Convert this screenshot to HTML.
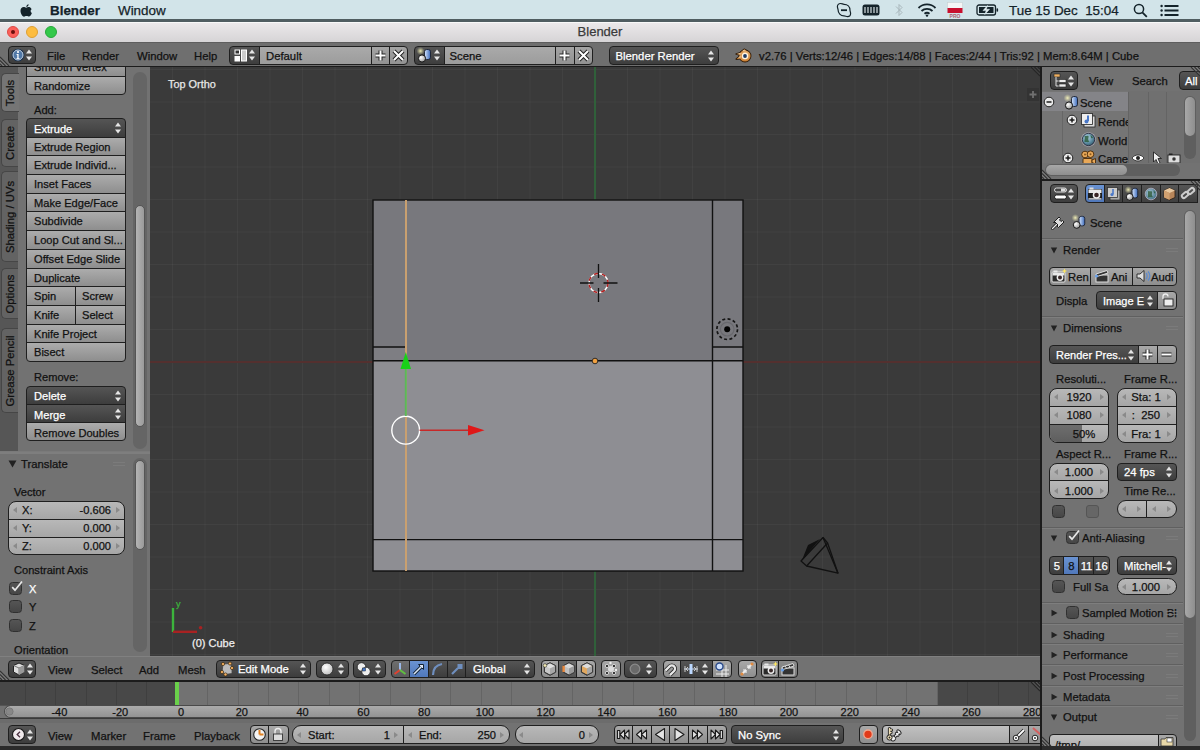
<!DOCTYPE html><html><head><meta charset="utf-8"><style>
*{margin:0;padding:0;box-sizing:border-box}
html,body{width:1200px;height:750px;overflow:hidden;background:#2a2a2a;font-family:"Liberation Sans",sans-serif}
.t{position:absolute;line-height:20px;white-space:nowrap;-webkit-text-stroke:0.25px currentColor}
div{position:absolute}
</style></head><body><div style="position:absolute;left:0px;top:0px;width:1200px;height:20px;background:#d2e4e9"></div>
<div style="position:absolute;left:0px;top:19px;width:1200px;height:3px;background:#505d61"></div>
<div style="position:absolute;left:0px;top:22px;width:1200px;height:1px;background:#f8f8f8"></div>
<div class="t" style="left:50px;top:0.8000000000000007px;font-size:13.4px;color:#14232a;font-weight:bold">Blender</div>
<svg style="position:absolute;left:19px;top:1px" width="14" height="17" viewBox="0 0 14 17"><path d="M9.6 1.2C9.7 2.5 8.7 3.9 7.3 4C7.2 2.7 8.3 1.4 9.6 1.2Z M12.6 6.3C11.3 7.1 11.2 9.2 12.9 10.1C12.5 11.5 11.4 13.5 10.2 13.6C9.2 13.7 9 13 7.6 13C6.2 13 5.9 13.7 5 13.7C3.8 13.7 1.5 11 1.5 7.8C1.5 5.3 3.1 4.1 4.6 4.1C5.7 4.1 6.4 4.8 7.2 4.8C8 4.8 8.6 4.1 9.9 4.1C10.6 4.1 11.8 4.5 12.6 6.3Z" fill="#14232a" transform="translate(0,2)"/></svg>
<svg style="position:absolute;left:836px;top:2px" width="16" height="16" viewBox="0 0 16 16"><path d="M4.5 1.5C6 1.5 6.8 2.3 8 2.3C11.5 2.3 14 4.8 14 8.3C14 9.4 14.6 10 14.6 11.5C14.6 13.3 13.3 14.6 11.5 14.6C10.3 14.6 9.3 13.9 8 13.9C4.5 13.9 2.1 11.2 2.1 8C2.1 6.8 1.4 6 1.4 4.6C1.4 2.9 2.8 1.5 4.5 1.5Z" fill="none" stroke="#14232a" stroke-width="1.2"/><path d="M5 8.2H11" stroke="#14232a" stroke-width="1.8"/></svg>
<svg style="position:absolute;left:862px;top:4px" width="18" height="12"><rect x="0.5" y="0.5" width="17" height="11" rx="2.5" fill="#14232a"/><path d="M3 3V9M6 3V9M9 3V9M12 3V9M15 3V9" stroke="#e8f0f2" stroke-width="1.1"/></svg>
<svg style="position:absolute;left:894px;top:2px" width="10" height="16"><path d="M2 4.5L8 10.5L5 13.5V2.5L8 5.5L2 11.5" fill="none" stroke="#a8b6bb" stroke-width="1"/></svg>
<svg style="position:absolute;left:917px;top:3px" width="20" height="14" viewBox="0 0 20 14"><path d="M1.5 5A12 12 0 0 1 18.5 5" stroke="#14232a" stroke-width="1.8" fill="none"/><path d="M4.5 8A8 8 0 0 1 15.5 8" stroke="#14232a" stroke-width="1.8" fill="none"/><path d="M7.5 10.8A4 4 0 0 1 12.5 10.8" stroke="#14232a" stroke-width="1.8" fill="none"/><circle cx="10" cy="12.6" r="1.2" fill="#14232a"/></svg>
<svg style="position:absolute;left:947px;top:2px" width="16" height="16"><rect x="0.5" y="0.5" width="15" height="6" fill="#f4f6f6" stroke="#c8d0d2" stroke-width="0.6"/><rect x="0.5" y="6" width="15" height="5" fill="#c8102e"/><text x="8" y="15.8" font-size="5" font-family="Liberation Sans" fill="#b06070" text-anchor="middle" font-weight="bold">PRO</text></svg>
<svg style="position:absolute;left:976px;top:4px" width="23" height="12" viewBox="0 0 23 12"><rect x="1" y="1" width="18.5" height="10" rx="2" fill="none" stroke="#14232a" stroke-width="1.3"/><rect x="3" y="3" width="14.5" height="6" fill="#14232a"/><path d="M11.5 1.5L7 6.6H10.2L8.8 10.5L13.5 5.3H10.3Z" fill="#e8f0f2" stroke="#d2e4e9" stroke-width="0.6"/><rect x="20.5" y="4.2" width="1.6" height="3.6" rx="0.8" fill="#14232a"/></svg>
<svg style="position:absolute;left:1133px;top:3px" width="15" height="15"><circle cx="6" cy="6" r="4.6" fill="none" stroke="#14232a" stroke-width="1.5"/><path d="M9.3 9.3L13.8 13.8" stroke="#14232a" stroke-width="1.8"/></svg>
<svg style="position:absolute;left:1160px;top:4px" width="20" height="13"><g fill="#14232a"><circle cx="1.6" cy="2" r="1.2"/><circle cx="1.6" cy="6.5" r="1.2"/><circle cx="1.6" cy="11" r="1.2"/><rect x="4.5" y="1" width="14" height="2"/><rect x="4.5" y="5.5" width="14" height="2"/><rect x="4.5" y="10" width="14" height="2"/></g></svg>
<div class="t" style="left:118px;top:0.8000000000000007px;font-size:13.4px;color:#14232a;">Window</div>
<div class="t" style="left:1009px;top:0.8000000000000007px;font-size:13.4px;color:#14232a;">Tue 15 Dec&nbsp; 15:04</div>
<div style="position:absolute;left:0px;top:23px;width:1200px;height:19px;background:linear-gradient(#ebe8ea,#d6d4d6)"></div>
<div class="t" style="left:500px;width:200px;text-align:center;top:22px;font-size:13px;color:#3a3a3a;">Blender</div>
<div style="position:absolute;left:7px;top:26px;width:12px;height:12px;background:#fc605b;border-radius:50%;border:0.5px solid #de4a45"></div>
<div style="position:absolute;left:26px;top:26px;width:12px;height:12px;background:#fdbc40;border-radius:50%;border:0.5px solid #dea033"></div>
<div style="position:absolute;left:45px;top:26px;width:12px;height:12px;background:#34c84a;border-radius:50%;border:0.5px solid #27a83a"></div>
<div style="position:absolute;left:11px;top:30px;width:4px;height:4px;background:#6a0f0c;border-radius:50%"></div>
<div style="position:absolute;left:0px;top:42px;width:1200px;height:24px;background:#6f6f6f"></div>
<div style="position:absolute;left:0px;top:66px;width:1200px;height:1px;background:#1c1c1c"></div>
<div style="position:absolute;left:0px;top:67px;width:150px;height:385px;background:#727272"></div>
<div style="position:absolute;left:0px;top:67px;width:18px;height:385px;background:#565656"></div>
<div style="position:absolute;left:150px;top:67px;width:890px;height:589px;background:#3a3a3a"></div>
<div style="position:absolute;left:0px;top:452px;width:150px;height:204px;background:#727272"></div>
<div style="position:absolute;left:0px;top:656px;width:1040px;height:24px;background:#727272"></div>
<div style="position:absolute;left:0px;top:680px;width:1040px;height:2px;background:#1c1c1c"></div>
<div style="position:absolute;left:0px;top:682px;width:1040px;height:24px;background:#727272"></div>
<div style="position:absolute;left:0px;top:682px;width:178px;height:24px;background:#484848"></div>
<div style="position:absolute;left:938px;top:682px;width:102px;height:24px;background:#484848"></div>
<div style="position:absolute;left:0px;top:706px;width:1040px;height:12px;background:#727272"></div>
<div style="position:absolute;left:0px;top:718px;width:1040px;height:28px;background:#727272"></div>
<div style="position:absolute;left:0px;top:718px;width:1040px;height:5px;background:#6c6c6c"></div>
<div style="position:absolute;left:1040px;top:67px;width:2px;height:679px;background:#1c1c1c"></div>
<div style="position:absolute;left:1042px;top:67px;width:158px;height:112px;background:#727272"></div>
<div style="position:absolute;left:1042px;top:179px;width:158px;height:2px;background:#1c1c1c"></div>
<div style="position:absolute;left:1042px;top:181px;width:158px;height:565px;background:#727272"></div>
<div style="position:absolute;left:0px;top:42px;width:1200px;height:1px;background:#5e5e5e"></div>
<div style="position:absolute;left:8px;top:46px;width:28px;height:18px;background:linear-gradient(#555,#3d3d3d);border:1px solid #1f1f1f;border-radius:4px"></div>
<svg style="position:absolute;left:11px;top:48px" width="14" height="14" viewBox="0 0 14 14"><circle cx="7" cy="7" r="6.3" fill="#16304f"/><circle cx="7" cy="7" r="5" fill="#4f77a6" stroke="#c8d4e2" stroke-width="1"/><circle cx="7" cy="4" r="1.1" fill="#fff"/><path d="M5.6 6h2v4.2h1v0.9h-3.2v-0.9h0.9v-3.3h-0.7z" fill="#fff"/></svg>
<svg style="position:absolute;left:25px;top:48px" width="8" height="14" viewBox="0 0 8 14"><path d="M4 1.5L7 5.5H1Z M4 12.5L7 8.5H1Z" fill="#e6e6e6"/></svg>
<div class="t" style="left:47px;top:46px;font-size:11.3px;color:#111;">File</div>
<div class="t" style="left:82px;top:46px;font-size:11.3px;color:#111;">Render</div>
<div class="t" style="left:137px;top:46px;font-size:11.3px;color:#111;">Window</div>
<div class="t" style="left:194px;top:46px;font-size:11.3px;color:#111;">Help</div>
<div style="position:absolute;left:229px;top:46px;width:31px;height:19px;background:linear-gradient(#555,#3d3d3d);border:1px solid #1f1f1f;border-radius:4px 0 0 4px"></div>
<svg style="position:absolute;left:234px;top:49px" width="14" height="13" viewBox="0 0 14 13"><rect x="0.5" y="0.5" width="5.5" height="5" fill="#fff"/><rect x="0.5" y="7" width="5.5" height="5.5" fill="#fff"/><rect x="7" y="0.5" width="6" height="12" fill="#fff"/><rect x="1.5" y="1.5" width="3.5" height="3" fill="#333"/><rect x="8" y="1.5" width="4" height="10" fill="#ccc"/></svg>
<svg style="position:absolute;left:248px;top:48px" width="8" height="14" viewBox="0 0 8 14"><path d="M4 1.5L7 5.5H1Z M4 12.5L7 8.5H1Z" fill="#e6e6e6"/></svg>
<div style="position:absolute;left:259px;top:46px;width:113px;height:19px;background:linear-gradient(#aaa,#9c9c9c);border:1px solid #1f1f1f"></div>
<div class="t" style="left:266px;top:46px;font-size:11.3px;color:#111;">Default</div>
<div style="position:absolute;left:371px;top:46px;width:19px;height:19px;background:linear-gradient(#a4a4a4,#929292);border:1px solid #1f1f1f"></div>
<div style="position:absolute;left:389px;top:46px;width:19px;height:19px;background:linear-gradient(#a4a4a4,#929292);border:1px solid #1f1f1f;border-radius:0 4px 4px 0"></div>
<svg style="position:absolute;left:374px;top:49px" width="13" height="13"><path d="M6.5 1.5V11.5M1.5 6.5H11.5" stroke="#222" stroke-width="4"/><path d="M6.5 1.5V11.5M1.5 6.5H11.5" stroke="#fff" stroke-width="2"/></svg>
<svg style="position:absolute;left:392px;top:49px" width="13" height="13"><path d="M2 2L11 11M11 2L2 11" stroke="#222" stroke-width="4"/><path d="M2 2L11 11M11 2L2 11" stroke="#fff" stroke-width="2"/></svg>
<div style="position:absolute;left:414px;top:46px;width:31px;height:19px;background:linear-gradient(#555,#3d3d3d);border:1px solid #1f1f1f;border-radius:4px 0 0 4px"></div>
<svg style="position:absolute;left:416px;top:47px" width="16.0" height="16.0" viewBox="0 0 16 16"><defs><radialGradient id="glw41647"><stop offset="0" stop-color="#fffbc0" stop-opacity="0.9"/><stop offset="1" stop-color="#d8d8a0" stop-opacity="0"/></radialGradient><linearGradient id="cyl41647" x1="0" x2="1"><stop offset="0" stop-color="#d8e8ff"/><stop offset="1" stop-color="#3a68b8"/></linearGradient><radialGradient id="sp41647" cx="0.35" cy="0.35" r="0.7"><stop offset="0" stop-color="#fff"/><stop offset="1" stop-color="#999"/></radialGradient></defs><circle cx="4.5" cy="4" r="4" fill="url(#glw41647)"/><rect x="8.5" y="2.5" width="6" height="10" rx="2.2" fill="url(#cyl41647)" stroke="#1a2030" stroke-width="0.9"/><circle cx="6" cy="11.5" r="3.6" fill="url(#sp41647)" stroke="#151515" stroke-width="1"/></svg>
<svg style="position:absolute;left:433px;top:48px" width="8" height="14" viewBox="0 0 8 14"><path d="M4 1.5L7 5.5H1Z M4 12.5L7 8.5H1Z" fill="#e6e6e6"/></svg>
<div style="position:absolute;left:444px;top:46px;width:112px;height:19px;background:linear-gradient(#aaa,#9c9c9c);border:1px solid #1f1f1f"></div>
<div class="t" style="left:449.5px;top:46px;font-size:11.3px;color:#111;">Scene</div>
<div style="position:absolute;left:555px;top:46px;width:20px;height:19px;background:linear-gradient(#a4a4a4,#929292);border:1px solid #1f1f1f"></div>
<div style="position:absolute;left:574px;top:46px;width:19px;height:19px;background:linear-gradient(#a4a4a4,#929292);border:1px solid #1f1f1f;border-radius:0 4px 4px 0"></div>
<svg style="position:absolute;left:558px;top:49px" width="13" height="13"><path d="M6.5 1.5V11.5M1.5 6.5H11.5" stroke="#222" stroke-width="4"/><path d="M6.5 1.5V11.5M1.5 6.5H11.5" stroke="#fff" stroke-width="2"/></svg>
<svg style="position:absolute;left:577px;top:49px" width="13" height="13"><path d="M2 2L11 11M11 2L2 11" stroke="#222" stroke-width="4"/><path d="M2 2L11 11M11 2L2 11" stroke="#fff" stroke-width="2"/></svg>
<div style="position:absolute;left:609px;top:46px;width:110px;height:19px;background:linear-gradient(#555,#3d3d3d);border:1px solid #1f1f1f;border-radius:4px"></div>
<div class="t" style="left:615.5px;top:45.5px;font-size:11.3px;color:#fff;">Blender Render</div>
<svg style="position:absolute;left:707px;top:48.5px" width="8" height="14" viewBox="0 0 8 14"><path d="M4 1.5L7 5.5H1Z M4 12.5L7 8.5H1Z" fill="#e6e6e6"/></svg>
<svg style="position:absolute;left:735px;top:48px" width="17" height="15" viewBox="0 0 17 15"><defs><radialGradient id="bl" cx="0.5" cy="0.4" r="0.6"><stop offset="0" stop-color="#f8d8a8"/><stop offset="1" stop-color="#c87828"/></radialGradient></defs><g fill="#2a1808" stroke="#2a1808" stroke-width="1.6" stroke-linejoin="round"><circle cx="10" cy="8" r="5.6"/><path d="M5.8 4.2L9.2 1.3L11.6 2.6Z"/><path d="M1.2 6L7.5 4.2L7.6 7.6Z"/><path d="M1.3 11.2L6.2 7L7.2 10.2Z"/></g><g fill="url(#bl)"><circle cx="10" cy="8" r="5.6"/><path d="M5.8 4.2L9.2 1.3L11.6 2.6Z"/><path d="M1.2 6L7.5 4.2L7.6 7.6Z"/><path d="M1.3 11.2L6.2 7L7.2 10.2Z"/></g><circle cx="10" cy="8" r="3.2" fill="#fff4e0"/><circle cx="10" cy="8" r="1.9" fill="#1c3a66"/></svg>
<div class="t" style="left:759px;top:46px;font-size:11.3px;color:#111;">v2.76 | Verts:12/46 | Edges:14/88 | Faces:2/44 | Tris:92 | Mem:8.64M | Cube</div>
<div style="position:absolute;left:1px;top:73px;width:18px;height:39px;background:#757575;border-radius:5px 0 0 5px;border:1px solid #464646;border-right:none"></div>
<div class="t" style="left:-50px;top:82.5px;width:120px;text-align:center;font-size:11.3px;color:#111;transform:rotate(-90deg)">Tools</div>
<div style="position:absolute;left:1px;top:119px;width:17px;height:48px;background:#636363;border-radius:5px 0 0 5px;border:1px solid #464646;border-right:none"></div>
<div class="t" style="left:-50px;top:133.0px;width:120px;text-align:center;font-size:11.3px;color:#111;transform:rotate(-90deg)">Create</div>
<div style="position:absolute;left:1px;top:171px;width:17px;height:91px;background:#636363;border-radius:5px 0 0 5px;border:1px solid #464646;border-right:none"></div>
<div class="t" style="left:-50px;top:206.5px;width:120px;text-align:center;font-size:11.3px;color:#111;transform:rotate(-90deg)">Shading / UVs</div>
<div style="position:absolute;left:1px;top:268px;width:17px;height:51px;background:#636363;border-radius:5px 0 0 5px;border:1px solid #464646;border-right:none"></div>
<div class="t" style="left:-50px;top:283.5px;width:120px;text-align:center;font-size:11.3px;color:#111;transform:rotate(-90deg)">Options</div>
<div style="position:absolute;left:1px;top:328px;width:17px;height:85px;background:#636363;border-radius:5px 0 0 5px;border:1px solid #464646;border-right:none"></div>
<div class="t" style="left:-50px;top:360.5px;width:120px;text-align:center;font-size:11.3px;color:#111;transform:rotate(-90deg)">Grease Pencil</div>
<div style="left:0;top:0;width:150px;height:452px;clip-path:inset(67px 0 0 0)">
<div style="position:absolute;left:26px;top:57px;width:100px;height:20px;background:linear-gradient(#acacac,#8e8e8e);border:1px solid #1f1f1f;border-radius:0;"></div>
<div class="t" style="left:34px;top:57px;font-size:11.1px;color:#111;">Smooth Vertex</div>
<div style="position:absolute;left:26px;top:76px;width:100px;height:19px;background:linear-gradient(#acacac,#8e8e8e);border:1px solid #1f1f1f;border-radius:0 0 4px 4px;"></div>
<div class="t" style="left:34px;top:76px;font-size:11.1px;color:#111;">Randomize</div>
</div>
<div class="t" style="left:34px;top:100px;font-size:11.1px;color:#111;">Add:</div>
<div style="position:absolute;left:26px;top:118px;width:100px;height:20px;background:linear-gradient(#555,#3d3d3d);border:1px solid #1f1f1f;border-radius:4px 4px 0 0"></div>
<svg style="position:absolute;left:114px;top:121.0px" width="8" height="14" viewBox="0 0 8 14"><path d="M4 1.5L7 5.5H1Z M4 12.5L7 8.5H1Z" fill="#e6e6e6"/></svg>
<div class="t" style="left:34px;top:119px;font-size:11.1px;color:#fff;">Extrude</div>
<div style="position:absolute;left:26px;top:137px;width:100px;height:19px;background:linear-gradient(#acacac,#8e8e8e);border:1px solid #1f1f1f;border-radius:0;"></div>
<div class="t" style="left:34px;top:137px;font-size:11.1px;color:#111;">Extrude Region</div>
<div style="position:absolute;left:26px;top:155px;width:100px;height:20px;background:linear-gradient(#acacac,#8e8e8e);border:1px solid #1f1f1f;border-radius:0;"></div>
<div class="t" style="left:34px;top:155px;font-size:11.1px;color:#111;">Extrude Individ...</div>
<div style="position:absolute;left:26px;top:174px;width:100px;height:20px;background:linear-gradient(#acacac,#8e8e8e);border:1px solid #1f1f1f;border-radius:0;"></div>
<div class="t" style="left:34px;top:174px;font-size:11.1px;color:#111;">Inset Faces</div>
<div style="position:absolute;left:26px;top:193px;width:100px;height:19px;background:linear-gradient(#acacac,#8e8e8e);border:1px solid #1f1f1f;border-radius:0;"></div>
<div class="t" style="left:34px;top:193px;font-size:11.1px;color:#111;">Make Edge/Face</div>
<div style="position:absolute;left:26px;top:211px;width:100px;height:20px;background:linear-gradient(#acacac,#8e8e8e);border:1px solid #1f1f1f;border-radius:0;"></div>
<div class="t" style="left:34px;top:211px;font-size:11.1px;color:#111;">Subdivide</div>
<div style="position:absolute;left:26px;top:230px;width:100px;height:20px;background:linear-gradient(#acacac,#8e8e8e);border:1px solid #1f1f1f;border-radius:0;"></div>
<div class="t" style="left:34px;top:230px;font-size:11.1px;color:#111;">Loop Cut and Sl...</div>
<div style="position:absolute;left:26px;top:249px;width:100px;height:20px;background:linear-gradient(#acacac,#8e8e8e);border:1px solid #1f1f1f;border-radius:0;"></div>
<div class="t" style="left:34px;top:249px;font-size:11.1px;color:#111;">Offset Edge Slide</div>
<div style="position:absolute;left:26px;top:268px;width:100px;height:19px;background:linear-gradient(#acacac,#8e8e8e);border:1px solid #1f1f1f;border-radius:0;"></div>
<div class="t" style="left:34px;top:268px;font-size:11.1px;color:#111;">Duplicate</div>
<div style="position:absolute;left:26px;top:286px;width:50px;height:20px;background:linear-gradient(#acacac,#8e8e8e);border:1px solid #1f1f1f;border-radius:0;"></div>
<div style="position:absolute;left:75px;top:286px;width:51px;height:20px;background:linear-gradient(#acacac,#8e8e8e);border:1px solid #1f1f1f;border-radius:0;"></div>
<div class="t" style="left:34px;top:286px;font-size:11.1px;color:#111;">Spin</div>
<div class="t" style="left:82px;top:286px;font-size:11.1px;color:#111;">Screw</div>
<div style="position:absolute;left:26px;top:305px;width:50px;height:20px;background:linear-gradient(#acacac,#8e8e8e);border:1px solid #1f1f1f;border-radius:0;"></div>
<div style="position:absolute;left:75px;top:305px;width:51px;height:20px;background:linear-gradient(#acacac,#8e8e8e);border:1px solid #1f1f1f;border-radius:0;"></div>
<div class="t" style="left:34px;top:305px;font-size:11.1px;color:#111;">Knife</div>
<div class="t" style="left:82px;top:305px;font-size:11.1px;color:#111;">Select</div>
<div style="position:absolute;left:26px;top:324px;width:100px;height:19px;background:linear-gradient(#acacac,#8e8e8e);border:1px solid #1f1f1f;border-radius:0;"></div>
<div class="t" style="left:34px;top:324px;font-size:11.1px;color:#111;">Knife Project</div>
<div style="position:absolute;left:26px;top:342px;width:100px;height:20px;background:linear-gradient(#acacac,#8e8e8e);border:1px solid #1f1f1f;border-radius:0 0 4px 4px;"></div>
<div class="t" style="left:34px;top:342px;font-size:11.1px;color:#111;">Bisect</div>
<div class="t" style="left:34px;top:367px;font-size:11.1px;color:#111;">Remove:</div>
<div style="position:absolute;left:26px;top:386px;width:100px;height:19px;background:linear-gradient(#555,#3d3d3d);border:1px solid #1f1f1f;border-radius:4px 4px 0 0"></div>
<svg style="position:absolute;left:114px;top:388.5px" width="8" height="14" viewBox="0 0 8 14"><path d="M4 1.5L7 5.5H1Z M4 12.5L7 8.5H1Z" fill="#e6e6e6"/></svg>
<div style="position:absolute;left:26px;top:404px;width:100px;height:19px;background:linear-gradient(#555,#3d3d3d);border:1px solid #1f1f1f;border-radius:0"></div>
<svg style="position:absolute;left:114px;top:406.5px" width="8" height="14" viewBox="0 0 8 14"><path d="M4 1.5L7 5.5H1Z M4 12.5L7 8.5H1Z" fill="#e6e6e6"/></svg>
<div style="position:absolute;left:26px;top:422px;width:100px;height:19px;background:linear-gradient(#acacac,#8e8e8e);border:1px solid #1f1f1f;border-radius:0 0 4px 4px;"></div>
<div class="t" style="left:34px;top:386px;font-size:11.1px;color:#fff;">Delete</div>
<div class="t" style="left:34px;top:404.5px;font-size:11.1px;color:#fff;">Merge</div>
<div class="t" style="left:34px;top:423px;font-size:11.1px;color:#111;">Remove Doubles</div>
<div style="position:absolute;left:133px;top:72px;width:14px;height:377px;background:#656565;border-radius:7px"></div>
<div style="position:absolute;left:135px;top:205px;width:10px;height:222px;background:linear-gradient(90deg,#b4b4b4,#9a9a9a);border-radius:5px;border:1px solid #555"></div>
<svg style="position:absolute;left:8px;top:460px" width="9" height="8"><path d="M0.5 0.5H8.5L4.5 7.5Z" fill="#222"/></svg>
<div class="t" style="left:21px;top:454px;font-size:11.3px;color:#111;">Translate</div>
<svg style="position:absolute;left:113px;top:461px" width="12" height="6"><path d="M0 1.5H12M0 4.5H12" stroke="#7e7e7e" stroke-width="0.8"/></svg>
<div class="t" style="left:14px;top:482px;font-size:11.1px;color:#111;">Vector</div>
<div style="position:absolute;left:8px;top:501px;width:117px;height:19px;background:linear-gradient(#b8b8b8,#a6a6a6);border:1px solid #1f1f1f;border-radius:8px 8px 0 0"></div>
<div style="position:absolute;left:8px;top:519px;width:117px;height:19px;background:linear-gradient(#b8b8b8,#a6a6a6);border:1px solid #1f1f1f;border-radius:0"></div>
<div style="position:absolute;left:8px;top:537px;width:117px;height:18px;background:linear-gradient(#b8b8b8,#a6a6a6);border:1px solid #1f1f1f;border-radius:0 0 8px 8px"></div>
<svg style="position:absolute;left:12px;top:506px" width="6" height="8"><path d="M5 1L1 4L5 7Z" fill="#8a8a8a"/></svg>
<svg style="position:absolute;left:115px;top:506px" width="6" height="8"><path d="M1 1L5 4L1 7Z" fill="#8a8a8a"/></svg>
<div class="t" style="left:22px;top:500px;font-size:11.1px;color:#111;">X:</div>
<div class="t" style="right:1089px;top:500px;font-size:11.1px;color:#111;">-0.606</div>
<svg style="position:absolute;left:12px;top:524px" width="6" height="8"><path d="M5 1L1 4L5 7Z" fill="#8a8a8a"/></svg>
<svg style="position:absolute;left:115px;top:524px" width="6" height="8"><path d="M1 1L5 4L1 7Z" fill="#8a8a8a"/></svg>
<div class="t" style="left:22px;top:518px;font-size:11.1px;color:#111;">Y:</div>
<div class="t" style="right:1089px;top:518px;font-size:11.1px;color:#111;">0.000</div>
<svg style="position:absolute;left:12px;top:542px" width="6" height="8"><path d="M5 1L1 4L5 7Z" fill="#8a8a8a"/></svg>
<svg style="position:absolute;left:115px;top:542px" width="6" height="8"><path d="M1 1L5 4L1 7Z" fill="#8a8a8a"/></svg>
<div class="t" style="left:22px;top:536px;font-size:11.1px;color:#111;">Z:</div>
<div class="t" style="right:1089px;top:536px;font-size:11.1px;color:#111;">0.000</div>
<div class="t" style="left:14px;top:560px;font-size:11.1px;color:#111;">Constraint Axis</div>
<div style="position:absolute;left:9px;top:582px;width:13px;height:13px;background:linear-gradient(#555,#464646);border:1px solid #303030;border-radius:3.5px"></div>
<svg style="position:absolute;left:9px;top:579px" width="16" height="16"><path d="M3.2 8.2L6 11.2L13 2.5" stroke="#e8e8e8" stroke-width="1.7" fill="none"/></svg>
<div class="t" style="left:29px;top:579px;font-size:11.1px;color:#fff;">X</div>
<div style="position:absolute;left:9px;top:600px;width:13px;height:13px;background:linear-gradient(#555,#464646);border:1px solid #303030;border-radius:3.5px"></div>
<div class="t" style="left:29px;top:597px;font-size:11.1px;color:#111;">Y</div>
<div style="position:absolute;left:9px;top:619px;width:13px;height:13px;background:linear-gradient(#555,#464646);border:1px solid #303030;border-radius:3.5px"></div>
<div class="t" style="left:29px;top:616px;font-size:11.1px;color:#111;">Z</div>
<div class="t" style="left:14px;top:640px;font-size:11.1px;color:#111;">Orientation</div>
<div style="position:absolute;left:133px;top:458px;width:14px;height:194px;background:#656565;border-radius:7px"></div>
<div style="position:absolute;left:135px;top:460px;width:10px;height:90px;background:linear-gradient(90deg,#b4b4b4,#9a9a9a);border-radius:5px;border:1px solid #555"></div>
<div style="left:150px;top:67px;width:890px;height:589px;overflow:hidden;background-color:#3a3a3a;background-image:linear-gradient(90deg,rgba(255,255,255,0.035) 1px,transparent 1px),linear-gradient(rgba(255,255,255,0.035) 1px,transparent 1px);background-size:32.5px 32.5px;background-position:22px 34.5px"></div>
<div style="position:absolute;left:150px;top:361px;width:890px;height:2px;background:#54302f"></div>
<div style="position:absolute;left:594px;top:67px;width:2px;height:589px;background:#30603a"></div>
<svg style="position:absolute;left:0;top:0" width="1200" height="750"><rect x="373" y="200" width="370" height="161" fill="#78787d"/><rect x="373" y="361" width="370" height="210" fill="#8e8e93"/><rect x="373" y="347" width="33" height="14" fill="#7e7e83"/><rect x="712.5" y="347" width="30.5" height="14" fill="#7e7e83"/><g stroke="#111" stroke-width="1.4" fill="none"><rect x="373" y="200" width="370" height="371"/><path d="M712.5 200V571M373 360.8H743M373 539.6H743M373 347H406M712.5 347H743"/></g><path d="M406 200V571" stroke="#c9a070" stroke-width="2"/><circle cx="595" cy="361" r="2.8" fill="#f0a040" stroke="#222" stroke-width="0.9"/><circle cx="598.5" cy="283" r="9.5" fill="none" stroke="#fff" stroke-width="1.5"/><circle cx="598.5" cy="283" r="9.5" fill="none" stroke="#b02020" stroke-width="1.5" stroke-dasharray="4 4"/><path d="M598.5 264V278M598.5 288V302M580 283H593.5M603.5 283H617.5" stroke="#111" stroke-width="1.3"/><circle cx="727.2" cy="329.2" r="10.3" fill="none" stroke="#151515" stroke-width="1.7" stroke-dasharray="3 2.4"/><circle cx="727.2" cy="329.2" r="6.8" fill="none" stroke="#68686d" stroke-width="1.2"/><circle cx="727.2" cy="329.2" r="3" fill="#000"/><circle cx="405.7" cy="430.2" r="13.9" fill="none" stroke="#fff" stroke-width="1.4"/><path d="M419.6 430.2H469" stroke="#c82828" stroke-width="1.6"/><path d="M468 425L484.5 430.2L468 435.5Z" fill="#e01818"/><path d="M405.8 416V368" stroke="#5ab85a" stroke-width="2"/><path d="M400.5 369L405.8 352L411 369Z" fill="#18d018"/><g stroke="#111" stroke-width="1.3" fill="none" stroke-linejoin="round"><path d="M823 537.5L801 561L806.6 566L838 573.2Z"/><path d="M823 537.5L827.6 543L838 573.2M827.6 543L806.6 566"/></g><path d="M808 545L820 539L802 560Z" fill="#111"/><path d="M173 632V608" stroke="#3cb43c" stroke-width="2.4"/><path d="M173 631.8H197" stroke="#a82222" stroke-width="2.4"/><circle cx="200.6" cy="627.8" r="1.8" fill="#a82222"/></svg>
<div class="t" style="left:176px;top:594px;font-size:9px;color:#3cb43c;">y</div>
<div class="t" style="left:168px;top:74px;font-size:10.9px;color:#e8e8e8;">Top Ortho</div>
<div class="t" style="left:192px;top:633px;font-size:11px;color:#f0f0f0;">(0) Cube</div>
<div style="position:absolute;left:1027px;top:88px;width:12px;height:13px;background:#333"></div>
<svg style="position:absolute;left:1027px;top:88px" width="12" height="13"><path d="M6 3V10M2.5 6.5H9.5" stroke="#707070" stroke-width="1.8"/></svg>
<div style="position:absolute;left:0px;top:656px;width:1040px;height:1px;background:#808080"></div>
<div style="position:absolute;left:8px;top:660px;width:28px;height:18px;background:linear-gradient(#555,#3d3d3d);border:1px solid #1f1f1f;border-radius:4px"></div>
<svg style="position:absolute;left:12px;top:662px" width="14" height="14" viewBox="0 0 14 14"><path d="M7 1L12.5 3.5V10L7 13L1.5 10V3.5Z" fill="#ddd" stroke="#222" stroke-width="1"/><path d="M7 6V13M1.5 3.5L7 6L12.5 3.5" stroke="#777" stroke-width="1" fill="none"/><path d="M7 6L12.5 3.5V10L7 13Z" fill="#999"/></svg>
<svg style="position:absolute;left:26px;top:662px" width="8" height="14" viewBox="0 0 8 14"><path d="M4 1.5L7 5.5H1Z M4 12.5L7 8.5H1Z" fill="#e6e6e6"/></svg>
<div class="t" style="left:48px;top:660px;font-size:11.3px;color:#111;">View</div>
<div class="t" style="left:91px;top:660px;font-size:11.3px;color:#111;">Select</div>
<div class="t" style="left:139px;top:660px;font-size:11.3px;color:#111;">Add</div>
<div class="t" style="left:178px;top:660px;font-size:11.3px;color:#111;">Mesh</div>
<div style="position:absolute;left:216px;top:660px;width:95px;height:18px;background:linear-gradient(#555,#3d3d3d);border:1px solid #1f1f1f;border-radius:4px"></div>
<div class="t" style="left:238px;top:659.0px;font-size:11.3px;color:#fff;">Edit Mode</div>
<svg style="position:absolute;left:299px;top:662.0px" width="8" height="14" viewBox="0 0 8 14"><path d="M4 1.5L7 5.5H1Z M4 12.5L7 8.5H1Z" fill="#e6e6e6"/></svg>
<svg style="position:absolute;left:219px;top:661px" width="16" height="16" viewBox="0 0 16 16"><path d="M4 3L11 2.5L13 6V12.5L6 13.5L3 11Z" fill="#bbb" stroke="#444" stroke-width="0.8"/><g fill="#f5b060" stroke="#3a2a10" stroke-width="0.7"><circle cx="4" cy="3" r="1.6"/><circle cx="11" cy="2.5" r="1.6"/><circle cx="13" cy="7" r="1.6"/><circle cx="6.5" cy="13.5" r="1.6"/><circle cx="3" cy="11" r="1.6"/></g></svg>
<div style="position:absolute;left:316px;top:660px;width:33px;height:18px;background:linear-gradient(#555,#3d3d3d);border:1px solid #1f1f1f;border-radius:4px"></div>
<svg style="position:absolute;left:337px;top:662.0px" width="8" height="14" viewBox="0 0 8 14"><path d="M4 1.5L7 5.5H1Z M4 12.5L7 8.5H1Z" fill="#e6e6e6"/></svg>
<svg style="position:absolute;left:320px;top:662px" width="14" height="14"><defs><radialGradient id="sph" cx="0.4" cy="0.35" r="0.7"><stop offset="0" stop-color="#fff"/><stop offset="1" stop-color="#bbb"/></radialGradient></defs><circle cx="7" cy="7" r="6" fill="url(#sph)" stroke="#222" stroke-width="0.8"/></svg>
<div style="position:absolute;left:353px;top:660px;width:33px;height:18px;background:linear-gradient(#555,#3d3d3d);border:1px solid #1f1f1f;border-radius:4px"></div>
<svg style="position:absolute;left:374px;top:662.0px" width="8" height="14" viewBox="0 0 8 14"><path d="M4 1.5L7 5.5H1Z M4 12.5L7 8.5H1Z" fill="#e6e6e6"/></svg>
<svg style="position:absolute;left:356px;top:661px" width="16" height="16"><circle cx="5.5" cy="6" r="4.3" fill="#eee" stroke="#222" stroke-width="0.8"/><circle cx="10" cy="10.5" r="4.3" fill="#eee" stroke="#222" stroke-width="0.8"/><rect x="6.5" y="7" width="3" height="3" fill="#4a78c8" stroke="#123" stroke-width="0.5"/></svg>
<div style="position:absolute;left:391px;top:660px;width:19px;height:18px;background:linear-gradient(#6e6e6e,#5a5a5a);border:1px solid #1f1f1f;border-radius:4px 0 0 4px"></div>
<div style="position:absolute;left:409px;top:660px;width:20px;height:18px;background:linear-gradient(#6a93d2,#5078bb);border:1px solid #1f1f1f;border-radius:0"></div>
<div style="position:absolute;left:428px;top:660px;width:20px;height:18px;background:linear-gradient(#555,#3d3d3d);border:1px solid #1f1f1f;border-radius:0"></div>
<div style="position:absolute;left:447px;top:660px;width:20px;height:18px;background:linear-gradient(#555,#3d3d3d);border:1px solid #1f1f1f;border-radius:0"></div>
<div style="position:absolute;left:465px;top:660px;width:70px;height:18px;background:linear-gradient(#555,#3d3d3d);border:1px solid #1f1f1f;border-radius:0 4px 4px 0"></div>
<div class="t" style="left:473px;top:659.0px;font-size:11.3px;color:#fff;">Global</div>
<svg style="position:absolute;left:523px;top:662.0px" width="8" height="14" viewBox="0 0 8 14"><path d="M4 1.5L7 5.5H1Z M4 12.5L7 8.5H1Z" fill="#e6e6e6"/></svg>
<svg style="position:absolute;left:392px;top:661px" width="16" height="16"><path d="M8 9V2" stroke="#9bb8e8" stroke-width="2"/><path d="M8 9L2.5 13" stroke="#e04030" stroke-width="2"/><path d="M8 9L13.5 13" stroke="#60c040" stroke-width="2"/></svg>
<svg style="position:absolute;left:411px;top:661px" width="16" height="16"><path d="M3 13L11 5" stroke="#123" stroke-width="3.2"/><path d="M7.5 3.5H12.5V8.5Z" fill="#dde8f8" stroke="#123" stroke-width="1"/><path d="M3 13L11 5" stroke="#dde8f8" stroke-width="1.6"/></svg>
<svg style="position:absolute;left:430px;top:661px" width="16" height="16"><path d="M3 14C3 8 6 4 12 3" stroke="#6f8fbf" stroke-width="2.2" fill="none"/></svg>
<svg style="position:absolute;left:449px;top:661px" width="16" height="16"><path d="M3 13L9 7" stroke="#6f8fbf" stroke-width="2.2"/><rect x="8.5" y="3" width="5" height="5" fill="#6f8fbf"/></svg>
<div style="position:absolute;left:541px;top:660px;width:19px;height:18px;background:linear-gradient(#a8a8a8,#8e8e8e);border:1px solid #1f1f1f;border-radius:4px 0 0 4px"></div>
<div style="position:absolute;left:558px;top:660px;width:20px;height:18px;background:linear-gradient(#6a6a6a,#555);border:1px solid #1f1f1f;border-radius:0"></div>
<div style="position:absolute;left:576px;top:660px;width:20px;height:18px;background:linear-gradient(#a8a8a8,#8e8e8e);border:1px solid #1f1f1f;border-radius:0 4px 4px 0"></div>
<svg style="position:absolute;left:542px;top:661px" width="16" height="16" viewBox="0 0 16 16"><path d="M8 1.8L13.6 4.7V11.2L8 14.2L2.4 11.2V4.7Z" fill="#c8c8c8" stroke="#3a3a3a" stroke-width="1"/><path d="M8 1.8L13.6 4.7L8 7.6L2.4 4.7Z" fill="#e0e0e0"/><path d="M8 7.6L13.6 4.7V11.2L8 14.2Z" fill="#a8a8a8"/><path d="M8 1.8L13.6 4.7V11.2L8 14.2L2.4 11.2V4.7Z" fill="none" stroke="#3a3a3a" stroke-width="1"/><circle cx="3" cy="4.5" r="1.8" fill="#f0e8b0" stroke="#333" stroke-width="0.6"/></svg>
<svg style="position:absolute;left:561px;top:661px" width="16" height="16" viewBox="0 0 16 16"><path d="M8 1.8L13.6 4.7V11.2L8 14.2L2.4 11.2V4.7Z" fill="#c0c0c0" stroke="#3a3a3a" stroke-width="1"/><path d="M8 1.8L13.6 4.7L8 7.6L2.4 4.7Z" fill="#d8d8d8"/><path d="M8 7.6L13.6 4.7V11.2L8 14.2Z" fill="#9a9a9a"/><path d="M8 1.8L13.6 4.7V11.2L8 14.2L2.4 11.2V4.7Z" fill="none" stroke="#3a3a3a" stroke-width="1"/><path d="M2.6 4.8V11" stroke="#e8863a" stroke-width="2.4"/></svg>
<svg style="position:absolute;left:579px;top:661px" width="16" height="16" viewBox="0 0 16 16"><path d="M8 1.8L13.6 4.7V11.2L8 14.2L2.4 11.2V4.7Z" fill="#e0a860" stroke="#3a3a3a" stroke-width="1"/><path d="M8 1.8L13.6 4.7L8 7.6L2.4 4.7Z" fill="#dcdcdc"/><path d="M8 7.6L13.6 4.7V11.2L8 14.2Z" fill="#a8a8a8"/><path d="M8 1.8L13.6 4.7V11.2L8 14.2L2.4 11.2V4.7Z" fill="none" stroke="#3a3a3a" stroke-width="1"/></svg>
<div style="position:absolute;left:601px;top:660px;width:20px;height:18px;background:linear-gradient(#a8a8a8,#8e8e8e);border:1px solid #1f1f1f;border-radius:4px"></div>
<svg style="position:absolute;left:603px;top:661px" width="16" height="16"><circle cx="8" cy="8" r="3" fill="#ddd"/><g fill="#222" stroke="#eee" stroke-width="0.8"><circle cx="4" cy="5" r="1.6"/><circle cx="11" cy="5" r="1.6"/><circle cx="4" cy="12" r="1.6"/><circle cx="11" cy="12" r="1.6"/></g><g fill="#eee"><circle cx="7.5" cy="2" r="1.2"/><circle cx="13" cy="9" r="1.2"/></g></svg>
<div style="position:absolute;left:624px;top:660px;width:33px;height:18px;background:linear-gradient(#555,#3d3d3d);border:1px solid #1f1f1f;border-radius:4px"></div>
<svg style="position:absolute;left:645px;top:662.0px" width="8" height="14" viewBox="0 0 8 14"><path d="M4 1.5L7 5.5H1Z M4 12.5L7 8.5H1Z" fill="#e6e6e6"/></svg>
<svg style="position:absolute;left:628px;top:662px" width="14" height="14"><circle cx="7" cy="7" r="4.8" fill="#6a6a6a" stroke="#8a8a8a" stroke-width="1.3"/></svg>
<div style="position:absolute;left:663px;top:660px;width:18px;height:18px;background:linear-gradient(#a8a8a8,#8e8e8e);border:1px solid #1f1f1f;border-radius:4px 0 0 4px"></div>
<svg style="position:absolute;left:663px;top:661px" width="17" height="16" viewBox="0 0 16 16"><g transform="rotate(-135 8 8)"><path d="M4.8 2.5V8.5A3.2 3.2 0 0 0 11.2 8.5V2.5" stroke="#2a2a2a" stroke-width="4" fill="none"/><path d="M4.8 2.5V8.5A3.2 3.2 0 0 0 11.2 8.5V2.5" stroke="#e8e8e8" stroke-width="2.2" fill="none"/></g></svg>
<div style="position:absolute;left:680px;top:660px;width:33px;height:18px;background:linear-gradient(#555,#3d3d3d);border:1px solid #1f1f1f;border-radius:0"></div>
<svg style="position:absolute;left:701px;top:662.0px" width="8" height="14" viewBox="0 0 8 14"><path d="M4 1.5L7 5.5H1Z M4 12.5L7 8.5H1Z" fill="#e6e6e6"/></svg>
<svg style="position:absolute;left:682px;top:661px" width="18" height="16"><path d="M2 8H16" stroke="#cfe0f8" stroke-width="1"/><path d="M9 3V13" stroke="#bcd8ff" stroke-width="3"/><path d="M3 5V11M15 5V11M6 6L4 8L6 10M12 6L14 8L12 10" stroke="#ccc" stroke-width="1" fill="none"/></svg>
<div style="position:absolute;left:712px;top:660px;width:20px;height:18px;background:linear-gradient(#a8a8a8,#8e8e8e);border:1px solid #1f1f1f;border-radius:0 4px 4px 0"></div>
<svg style="position:absolute;left:714px;top:661px" width="16" height="16"><path d="M2 9H15M2 13H15M8 4V16M12 4V16" stroke="#eee" stroke-width="1"/><circle cx="5.5" cy="5.5" r="3.5" fill="#cfe2ff" stroke="#2a4a8a" stroke-width="1.4"/></svg>
<div style="position:absolute;left:738px;top:660px;width:19px;height:18px;background:linear-gradient(#a8a8a8,#8e8e8e);border:1px solid #1f1f1f;border-radius:4px"></div>
<svg style="position:absolute;left:739px;top:661px" width="16" height="16"><path d="M3 13L7 9M13 3L9 7" stroke="#eee" stroke-width="2"/><path d="M7 9V12M7 9H4M9 7V4M9 7H12" stroke="#eee" stroke-width="1.2"/><circle cx="3" cy="13" r="1.6" fill="#e08a40"/><circle cx="13" cy="3" r="1.6" fill="#e08a40"/></svg>
<div style="position:absolute;left:761px;top:660px;width:18px;height:18px;background:linear-gradient(#8c8c8c,#767676);border:1px solid #1f1f1f;border-radius:4px 0 0 4px"></div>
<div style="position:absolute;left:778px;top:660px;width:20px;height:18px;background:linear-gradient(#8c8c8c,#767676);border:1px solid #1f1f1f;border-radius:0 4px 4px 0"></div>
<svg style="position:absolute;left:762px;top:661px" width="16" height="16" viewBox="0 0 16 16"><rect x="1" y="4" width="13" height="10" rx="1" fill="#2a2a2a" stroke="#eee" stroke-width="0.9"/><rect x="1.5" y="4.5" width="12" height="3" fill="#e8e8e8"/><rect x="2.5" y="2.5" width="4" height="2" fill="#e8e8e8"/><circle cx="9" cy="9.5" r="3.4" fill="#eee"/><circle cx="9" cy="9.5" r="2" fill="#3a2a2a"/><path d="M13.5 0.5L14.2 2.3L16 3L14.2 3.7L13.5 5.5L12.8 3.7L11 3L12.8 2.3Z" fill="#ffe860"/></svg>
<svg style="position:absolute;left:780px;top:661px" width="16" height="16"><rect x="2" y="7" width="12" height="7" fill="#333" stroke="#ddd" stroke-width="1"/><path d="M2 6L13 2.5L14 5L3 8.5Z" fill="#333" stroke="#ddd" stroke-width="1"/><path d="M5 5L6.5 7.2M8.5 4L10 6.2" stroke="#ddd" stroke-width="1"/><circle cx="2.5" cy="9" r="1.6" fill="#6aa0e8"/></svg>
<div style="position:absolute;left:25px;top:682px;width:1px;height:24px;background:rgba(0,0,0,0.12)"></div>
<div style="position:absolute;left:55px;top:682px;width:1px;height:24px;background:rgba(0,0,0,0.12)"></div>
<div style="position:absolute;left:86px;top:682px;width:1px;height:24px;background:rgba(0,0,0,0.12)"></div>
<div style="position:absolute;left:116px;top:682px;width:1px;height:24px;background:rgba(0,0,0,0.12)"></div>
<div style="position:absolute;left:146px;top:682px;width:1px;height:24px;background:rgba(0,0,0,0.12)"></div>
<div style="position:absolute;left:177px;top:682px;width:1px;height:24px;background:rgba(0,0,0,0.12)"></div>
<div style="position:absolute;left:207px;top:682px;width:1px;height:24px;background:rgba(0,0,0,0.12)"></div>
<div style="position:absolute;left:238px;top:682px;width:1px;height:24px;background:rgba(0,0,0,0.12)"></div>
<div style="position:absolute;left:268px;top:682px;width:1px;height:24px;background:rgba(0,0,0,0.12)"></div>
<div style="position:absolute;left:298px;top:682px;width:1px;height:24px;background:rgba(0,0,0,0.12)"></div>
<div style="position:absolute;left:329px;top:682px;width:1px;height:24px;background:rgba(0,0,0,0.12)"></div>
<div style="position:absolute;left:359px;top:682px;width:1px;height:24px;background:rgba(0,0,0,0.12)"></div>
<div style="position:absolute;left:390px;top:682px;width:1px;height:24px;background:rgba(0,0,0,0.12)"></div>
<div style="position:absolute;left:420px;top:682px;width:1px;height:24px;background:rgba(0,0,0,0.12)"></div>
<div style="position:absolute;left:450px;top:682px;width:1px;height:24px;background:rgba(0,0,0,0.12)"></div>
<div style="position:absolute;left:481px;top:682px;width:1px;height:24px;background:rgba(0,0,0,0.12)"></div>
<div style="position:absolute;left:511px;top:682px;width:1px;height:24px;background:rgba(0,0,0,0.12)"></div>
<div style="position:absolute;left:542px;top:682px;width:1px;height:24px;background:rgba(0,0,0,0.12)"></div>
<div style="position:absolute;left:572px;top:682px;width:1px;height:24px;background:rgba(0,0,0,0.12)"></div>
<div style="position:absolute;left:602px;top:682px;width:1px;height:24px;background:rgba(0,0,0,0.12)"></div>
<div style="position:absolute;left:633px;top:682px;width:1px;height:24px;background:rgba(0,0,0,0.12)"></div>
<div style="position:absolute;left:663px;top:682px;width:1px;height:24px;background:rgba(0,0,0,0.12)"></div>
<div style="position:absolute;left:694px;top:682px;width:1px;height:24px;background:rgba(0,0,0,0.12)"></div>
<div style="position:absolute;left:724px;top:682px;width:1px;height:24px;background:rgba(0,0,0,0.12)"></div>
<div style="position:absolute;left:754px;top:682px;width:1px;height:24px;background:rgba(0,0,0,0.12)"></div>
<div style="position:absolute;left:785px;top:682px;width:1px;height:24px;background:rgba(0,0,0,0.12)"></div>
<div style="position:absolute;left:815px;top:682px;width:1px;height:24px;background:rgba(0,0,0,0.12)"></div>
<div style="position:absolute;left:846px;top:682px;width:1px;height:24px;background:rgba(0,0,0,0.12)"></div>
<div style="position:absolute;left:876px;top:682px;width:1px;height:24px;background:rgba(0,0,0,0.12)"></div>
<div style="position:absolute;left:906px;top:682px;width:1px;height:24px;background:rgba(0,0,0,0.12)"></div>
<div style="position:absolute;left:937px;top:682px;width:1px;height:24px;background:rgba(0,0,0,0.12)"></div>
<div style="position:absolute;left:967px;top:682px;width:1px;height:24px;background:rgba(0,0,0,0.12)"></div>
<div style="position:absolute;left:998px;top:682px;width:1px;height:24px;background:rgba(0,0,0,0.12)"></div>
<div style="position:absolute;left:1028px;top:682px;width:1px;height:24px;background:rgba(0,0,0,0.12)"></div>
<div style="position:absolute;left:175px;top:682px;width:4px;height:24px;background:#6ad04a"></div>
<div style="position:absolute;left:0px;top:705px;width:1040px;height:1px;background:#555"></div>
<div style="position:absolute;left:4px;top:705px;width:1036px;height:13px;background:linear-gradient(#ababab,#939393);border-radius:6.5px 0 0 6.5px;border:1px solid #4a4a4a;border-right:none"></div>
<svg style="position:absolute;left:4px;top:706px" width="11" height="11"><circle cx="5.5" cy="5.5" r="3.6" fill="#888" stroke="#7a7a7a" stroke-width="1"/></svg>
<div class="t" style="left:-40.599999999999994px;width:200px;text-align:center;top:702px;font-size:11px;color:#111;">-40</div>
<div class="t" style="left:20.200000000000003px;width:200px;text-align:center;top:702px;font-size:11px;color:#111;">-20</div>
<div class="t" style="left:81.0px;width:200px;text-align:center;top:702px;font-size:11px;color:#111;">0</div>
<div class="t" style="left:141.8px;width:200px;text-align:center;top:702px;font-size:11px;color:#111;">20</div>
<div class="t" style="left:202.60000000000002px;width:200px;text-align:center;top:702px;font-size:11px;color:#111;">40</div>
<div class="t" style="left:263.4px;width:200px;text-align:center;top:702px;font-size:11px;color:#111;">60</div>
<div class="t" style="left:324.2px;width:200px;text-align:center;top:702px;font-size:11px;color:#111;">80</div>
<div class="t" style="left:385.0px;width:200px;text-align:center;top:702px;font-size:11px;color:#111;">100</div>
<div class="t" style="left:445.79999999999995px;width:200px;text-align:center;top:702px;font-size:11px;color:#111;">120</div>
<div class="t" style="left:506.6px;width:200px;text-align:center;top:702px;font-size:11px;color:#111;">140</div>
<div class="t" style="left:567.4px;width:200px;text-align:center;top:702px;font-size:11px;color:#111;">160</div>
<div class="t" style="left:628.2px;width:200px;text-align:center;top:702px;font-size:11px;color:#111;">180</div>
<div class="t" style="left:689.0px;width:200px;text-align:center;top:702px;font-size:11px;color:#111;">200</div>
<div class="t" style="left:749.8px;width:200px;text-align:center;top:702px;font-size:11px;color:#111;">220</div>
<div class="t" style="left:810.6px;width:200px;text-align:center;top:702px;font-size:11px;color:#111;">240</div>
<div class="t" style="left:871.4px;width:200px;text-align:center;top:702px;font-size:11px;color:#111;">260</div>
<div class="t" style="left:932.2px;width:200px;text-align:center;top:702px;font-size:11px;color:#111;">280</div>
<div style="position:absolute;left:0px;top:718px;width:1040px;height:1px;background:#3a3a3a"></div>
<div style="position:absolute;left:0px;top:746px;width:1200px;height:4px;background:#2b2b2b"></div>
<div style="position:absolute;left:8px;top:725px;width:28px;height:19px;background:linear-gradient(#555,#3d3d3d);border:1px solid #1f1f1f;border-radius:4px"></div>
<svg style="position:absolute;left:11px;top:727px" width="15" height="15"><circle cx="7.5" cy="7.5" r="6" fill="#f0eaec" stroke="#1a1a1a" stroke-width="1.1"/><path d="M9 4.8L6.2 7.5L9 10.2" stroke="#4a3040" stroke-width="1.3" fill="none"/></svg>
<svg style="position:absolute;left:26px;top:727.5px" width="8" height="14" viewBox="0 0 8 14"><path d="M4 1.5L7 5.5H1Z M4 12.5L7 8.5H1Z" fill="#e6e6e6"/></svg>
<div class="t" style="left:48px;top:726px;font-size:11.3px;color:#111;">View</div>
<div class="t" style="left:91px;top:726px;font-size:11.3px;color:#111;">Marker</div>
<div class="t" style="left:143px;top:726px;font-size:11.3px;color:#111;">Frame</div>
<div class="t" style="left:194px;top:726px;font-size:11.3px;color:#111;">Playback</div>
<div style="position:absolute;left:250px;top:725px;width:20px;height:19px;background:linear-gradient(#a8a8a8,#8e8e8e);border:1px solid #1f1f1f;border-radius:4px 0 0 4px"></div>
<div style="position:absolute;left:268px;top:725px;width:21px;height:19px;background:linear-gradient(#a8a8a8,#8e8e8e);border:1px solid #1f1f1f;border-radius:0 4px 4px 0"></div>
<svg style="position:absolute;left:252px;top:727px" width="15" height="15"><circle cx="7.5" cy="7.5" r="5.8" fill="#f4f4f4" stroke="#222" stroke-width="1.1"/><path d="M7.5 7.5V3M7.5 7.5H11.5" stroke="#e08020" stroke-width="2"/></svg>
<svg style="position:absolute;left:271px;top:727px" width="14" height="15"><path d="M4 7V4.5A3 3 0 0 1 10 4.5V7" stroke="#eee" stroke-width="1.4" fill="none"/><rect x="2.5" y="7" width="9" height="6.5" fill="#ddd" stroke="#333" stroke-width="0.9"/></svg>
<div style="position:absolute;left:292px;top:725px;width:112px;height:19px;background:linear-gradient(#b8b8b8,#a6a6a6);border:1px solid #1f1f1f;border-radius:9px 0 0 9px"></div>
<div style="position:absolute;left:403px;top:725px;width:107px;height:19px;background:linear-gradient(#b8b8b8,#a6a6a6);border:1px solid #1f1f1f;border-radius:0 9px 9px 0"></div>
<svg style="position:absolute;left:296px;top:731px" width="6" height="8"><path d="M5 1L1 4L5 7Z" fill="#8a8a8a"/></svg>
<svg style="position:absolute;left:393px;top:731px" width="6" height="8"><path d="M1 1L5 4L1 7Z" fill="#8a8a8a"/></svg>
<svg style="position:absolute;left:407px;top:731px" width="6" height="8"><path d="M5 1L1 4L5 7Z" fill="#8a8a8a"/></svg>
<svg style="position:absolute;left:499px;top:731px" width="6" height="8"><path d="M1 1L5 4L1 7Z" fill="#8a8a8a"/></svg>
<div class="t" style="left:308px;top:725px;font-size:11.1px;color:#111;">Start:</div>
<div class="t" style="right:810px;top:725px;font-size:11.1px;color:#111;">1</div>
<div class="t" style="left:419px;top:725px;font-size:11.1px;color:#111;">End:</div>
<div class="t" style="right:704px;top:725px;font-size:11.1px;color:#111;">250</div>
<div style="position:absolute;left:515px;top:725px;width:84px;height:19px;background:linear-gradient(#b8b8b8,#a6a6a6);border:1px solid #1f1f1f;border-radius:9px"></div>
<svg style="position:absolute;left:518px;top:731px" width="6" height="8"><path d="M5 1L1 4L5 7Z" fill="#8a8a8a"/></svg>
<svg style="position:absolute;left:588px;top:731px" width="6" height="8"><path d="M1 1L5 4L1 7Z" fill="#8a8a8a"/></svg>
<div class="t" style="right:615px;top:725px;font-size:11.1px;color:#111;">0</div>
<div style="position:absolute;left:614px;top:725px;width:19px;height:19px;background:linear-gradient(#a8a8a8,#8e8e8e);border:1px solid #1f1f1f;border-radius:4px 0 0 4px"></div>
<div style="position:absolute;left:632px;top:725px;width:20px;height:19px;background:linear-gradient(#a8a8a8,#8e8e8e);border:1px solid #1f1f1f;border-radius:0"></div>
<div style="position:absolute;left:651px;top:725px;width:19px;height:19px;background:linear-gradient(#a8a8a8,#8e8e8e);border:1px solid #1f1f1f;border-radius:0"></div>
<div style="position:absolute;left:669px;top:725px;width:20px;height:19px;background:linear-gradient(#a8a8a8,#8e8e8e);border:1px solid #1f1f1f;border-radius:0"></div>
<div style="position:absolute;left:688px;top:725px;width:20px;height:19px;background:linear-gradient(#a8a8a8,#8e8e8e);border:1px solid #1f1f1f;border-radius:0"></div>
<div style="position:absolute;left:707px;top:725px;width:20px;height:19px;background:linear-gradient(#a8a8a8,#8e8e8e);border:1px solid #1f1f1f;border-radius:0 4px 4px 0"></div>
<svg style="position:absolute;left:615px;top:726px" width="17" height="17"><path d="M2.5 4.5H4.8V12.5H2.5Z M9.5 4L5 8.5L9.5 13Z M14 4L9.5 8.5L14 13Z" fill="#e4e4e4" stroke="#1a1a1a" stroke-width="1.1" stroke-linejoin="round"/></svg>
<svg style="position:absolute;left:633px;top:726px" width="17" height="17"><path d="M8.5 4L3.5 8.5L8.5 13Z M13.5 4L8.5 8.5L13.5 13Z" fill="#e4e4e4" stroke="#1a1a1a" stroke-width="1.1" stroke-linejoin="round"/></svg>
<svg style="position:absolute;left:652px;top:726px" width="17" height="17"><path d="M12.5 2.5L3.5 8.5L12.5 14.5Z" fill="#e4e4e4" stroke="#1a1a1a" stroke-width="1.1" stroke-linejoin="round"/></svg>
<svg style="position:absolute;left:670px;top:726px" width="17" height="17"><path d="M5 2.5L14 8.5L5 14.5Z" fill="#e4e4e4" stroke="#1a1a1a" stroke-width="1.1" stroke-linejoin="round"/></svg>
<svg style="position:absolute;left:689px;top:726px" width="17" height="17"><path d="M3.5 4L8.5 8.5L3.5 13Z M8.5 4L13.5 8.5L8.5 13Z" fill="#e4e4e4" stroke="#1a1a1a" stroke-width="1.1" stroke-linejoin="round"/></svg>
<svg style="position:absolute;left:708px;top:726px" width="17" height="17"><path d="M3 4L7.5 8.5L3 13Z M7.5 4L12 8.5L7.5 13Z M12.2 4.5H14.5V12.5H12.2Z" fill="#e4e4e4" stroke="#1a1a1a" stroke-width="1.1" stroke-linejoin="round"/></svg>
<div style="position:absolute;left:731px;top:725px;width:113px;height:19px;background:linear-gradient(#555,#3d3d3d);border:1px solid #1f1f1f;border-radius:4px"></div>
<div class="t" style="left:738px;top:724.5px;font-size:11.3px;color:#fff;">No Sync</div>
<svg style="position:absolute;left:832px;top:727.5px" width="8" height="14" viewBox="0 0 8 14"><path d="M4 1.5L7 5.5H1Z M4 12.5L7 8.5H1Z" fill="#e6e6e6"/></svg>
<div style="position:absolute;left:859px;top:725px;width:19px;height:19px;background:linear-gradient(#a8a8a8,#8e8e8e);border:1px solid #1f1f1f;border-radius:4px"></div>
<svg style="position:absolute;left:861px;top:727px" width="15" height="15"><circle cx="7" cy="7.3" r="4.3" fill="#e03a1a" stroke="#f0a890" stroke-width="1.3"/></svg>
<div style="position:absolute;left:882px;top:725px;width:128px;height:19px;background:linear-gradient(#c0c0c0,#aaa);border:1px solid #1f1f1f;border-radius:4px 0 0 4px"></div>
<svg style="position:absolute;left:884px;top:726px" width="20" height="18" viewBox="0 0 20 18"><g stroke="#222" stroke-width="3.2" stroke-linecap="round" fill="none"><path d="M5.5 2.5V10M5.5 4H7.5M5.5 6.5H7"/><path d="M9.5 12L15.5 6M14 5L16 7M12.5 7.5L14 9"/></g><g stroke-linecap="round" fill="none"><path d="M5.5 2.5V10M5.5 4H7.5M5.5 6.5H7" stroke="#efe0b8" stroke-width="1.4"/><path d="M9.5 12L15.5 6M14 5L16 7M12.5 7.5L14 9" stroke="#f2f2f2" stroke-width="1.4"/></g><circle cx="9" cy="12.5" r="2.6" fill="#f2f2f2" stroke="#222" stroke-width="1"/><circle cx="5.5" cy="11.5" r="2.6" fill="#efe0b8" stroke="#222" stroke-width="1"/><circle cx="5.5" cy="11.5" r="0.9" fill="#222"/></svg>
<div style="position:absolute;left:1009px;top:725px;width:21px;height:19px;background:linear-gradient(#a8a8a8,#8e8e8e);border:1px solid #1f1f1f;border-radius:0"></div>
<div style="position:absolute;left:1028px;top:725px;width:18px;height:19px;background:linear-gradient(#a8a8a8,#8e8e8e);border:1px solid #1f1f1f;border-radius:0"></div>
<svg style="position:absolute;left:1011px;top:726px" width="17" height="17"><path d="M6 11L13 4" stroke="#222" stroke-width="3.5"/><path d="M6 11L13 4" stroke="#fff" stroke-width="1.8"/><circle cx="5" cy="12" r="2.8" fill="#fff" stroke="#222" stroke-width="1"/><circle cx="5" cy="12" r="0.9" fill="#222"/></svg>
<svg style="position:absolute;left:1030px;top:726px" width="10" height="17"><path d="M3 2L11 9" stroke="#d46060" stroke-width="2"/><circle cx="5" cy="12" r="2.8" fill="#fff" stroke="#222" stroke-width="1"/><circle cx="5" cy="12" r="0.9" fill="#222"/></svg>
<div style="position:absolute;left:1040px;top:67px;width:2px;height:683px;background:#1c1c1c"></div>
<div style="position:absolute;left:1042px;top:67px;width:158px;height:112px;background:#727272"></div>
<div style="position:absolute;left:1042px;top:179px;width:158px;height:2px;background:#1c1c1c"></div>
<div style="position:absolute;left:1042px;top:181px;width:158px;height:565px;background:#727272"></div>
<div style="position:absolute;left:1042px;top:746px;width:158px;height:4px;background:#2b2b2b"></div>
<div style="position:absolute;left:1042px;top:67px;width:158px;height:24px;background:#727272"></div>
<div style="position:absolute;left:1050px;top:71px;width:28px;height:19px;background:linear-gradient(#555,#3d3d3d);border:1px solid #1f1f1f;border-radius:4px"></div>
<svg style="position:absolute;left:1053px;top:73px" width="16" height="15"><rect x="1" y="1" width="6" height="3" fill="#f0b060" stroke="#222" stroke-width="0.6"/><path d="M3 4V13H6M3 8H6" stroke="#ddd" stroke-width="1" fill="none"/><rect x="6" y="6.5" width="7" height="3" fill="#eee" stroke="#222" stroke-width="0.6"/><rect x="6" y="11" width="7" height="3" fill="#eee" stroke="#222" stroke-width="0.6"/></svg>
<svg style="position:absolute;left:1067px;top:73.5px" width="8" height="14" viewBox="0 0 8 14"><path d="M4 1.5L7 5.5H1Z M4 12.5L7 8.5H1Z" fill="#e6e6e6"/></svg>
<div class="t" style="left:1089px;top:71px;font-size:11.3px;color:#111;">View</div>
<div class="t" style="left:1132px;top:71px;font-size:11.3px;color:#111;">Search</div>
<div style="position:absolute;left:1179px;top:71px;width:30px;height:19px;background:linear-gradient(#555,#3d3d3d);border:1px solid #1f1f1f;border-radius:4px"></div>
<div class="t" style="left:1185px;top:70.5px;font-size:11.3px;color:#fff;">All</div>
<div style="position:absolute;left:1042px;top:91px;width:158px;height:88px;background:#757575"></div>
<div style="position:absolute;left:1128px;top:91px;width:72px;height:75px;background:#707070"></div>
<div style="position:absolute;left:1042px;top:92px;width:86px;height:19px;background:#848488"></div>
<div style="position:absolute;left:1128px;top:92px;width:1px;height:72px;background:rgba(0,0,0,0.1)"></div>
<div style="position:absolute;left:1147.5px;top:92px;width:1px;height:72px;background:rgba(0,0,0,0.1)"></div>
<div style="position:absolute;left:1166px;top:92px;width:1px;height:72px;background:rgba(0,0,0,0.1)"></div>
<div style="position:absolute;left:1062px;top:111px;width:1px;height:55px;background:rgba(0,0,0,0.12)"></div>
<svg style="position:absolute;left:1043px;top:96px" width="12" height="12"><circle cx="6" cy="6" r="4.8" fill="#e8e8e8" stroke="#222" stroke-width="1"/><path d="M3.5 6H8.5" stroke="#111" stroke-width="1.4"/></svg>
<svg style="position:absolute;left:1063px;top:94px" width="16.0" height="16.0" viewBox="0 0 16 16"><defs><radialGradient id="glw106394"><stop offset="0" stop-color="#fffbc0" stop-opacity="0.9"/><stop offset="1" stop-color="#d8d8a0" stop-opacity="0"/></radialGradient><linearGradient id="cyl106394" x1="0" x2="1"><stop offset="0" stop-color="#d8e8ff"/><stop offset="1" stop-color="#3a68b8"/></linearGradient><radialGradient id="sp106394" cx="0.35" cy="0.35" r="0.7"><stop offset="0" stop-color="#fff"/><stop offset="1" stop-color="#999"/></radialGradient></defs><circle cx="4.5" cy="4" r="4" fill="url(#glw106394)"/><rect x="8.5" y="2.5" width="6" height="10" rx="2.2" fill="url(#cyl106394)" stroke="#1a2030" stroke-width="0.9"/><circle cx="6" cy="11.5" r="3.6" fill="url(#sp106394)" stroke="#151515" stroke-width="1"/></svg>
<div class="t" style="left:1080px;top:93px;font-size:11.3px;color:#111;">Scene</div>
<svg style="position:absolute;left:1066px;top:114px" width="12" height="12"><circle cx="6" cy="6" r="4.8" fill="#e8e8e8" stroke="#222" stroke-width="1"/><path d="M3.5 6H8.5" stroke="#111" stroke-width="1.4"/><path d="M6 3.5V8.5" stroke="#111" stroke-width="1.4"/></svg>
<svg style="position:absolute;left:1080px;top:112px" width="17" height="17"><rect x="4" y="4" width="11" height="11" fill="#ddd" stroke="#222" stroke-width="0.8"/><rect x="1.5" y="1.5" width="11" height="11" fill="#eee" stroke="#222" stroke-width="0.8"/><path d="M8 3.5V9" stroke="#4a78c8" stroke-width="2"/><circle cx="6.5" cy="9.5" r="2" fill="#4a78c8"/></svg>
<div style="left:0;top:0;width:1128px;height:180px;overflow:hidden">
<div class="t" style="left:1098px;top:112px;font-size:11.3px;color:#111;">Rende</div>
</div>
<svg style="position:absolute;left:1080px;top:131px" width="17" height="17" viewBox="0 0 17 17"><defs><radialGradient id="wo" cx="0.4" cy="0.35" r="0.75"><stop offset="0" stop-color="#b8d8e8"/><stop offset="0.6" stop-color="#5a8aa0"/><stop offset="1" stop-color="#2a4a5a"/></radialGradient></defs><circle cx="8.5" cy="8.5" r="7.3" fill="#dde" opacity="0.5"/><circle cx="8.5" cy="8.5" r="6.2" fill="url(#wo)" stroke="#223" stroke-width="0.8"/><path d="M4.5 5C6 5.5 7 4.2 8.5 5C9 7 7.3 8.3 9.3 10.5C8 12 6 10.5 4.6 11.2C4 9 5.5 7.5 4.5 5Z" fill="#2e5e3e" opacity="0.85"/><path d="M10.5 4C11.8 4.5 12.5 5.5 13 7L11.2 7.2Z" fill="#2e5e3e" opacity="0.85"/></svg>
<div class="t" style="left:1098px;top:131px;font-size:11.3px;color:#111;">World</div>
<svg style="position:absolute;left:1062px;top:152px" width="12" height="12"><circle cx="6" cy="6" r="4.8" fill="#e8e8e8" stroke="#222" stroke-width="1"/><path d="M3.5 6H8.5" stroke="#111" stroke-width="1.4"/><path d="M6 3.5V8.5" stroke="#111" stroke-width="1.4"/></svg>
<svg style="position:absolute;left:1080px;top:150px" width="17" height="17" viewBox="0 0 17 17"><g fill="#e8a858" stroke="#4a2a08" stroke-width="0.9"><circle cx="5" cy="4.5" r="3.3"/><circle cx="10.5" cy="4.2" r="3.3"/><rect x="3" y="8.5" width="9" height="5.5" rx="1"/><path d="M12 10L15.5 8.5V14L12 12.5Z"/></g><circle cx="5" cy="4.5" r="1" fill="#8a5a20"/><circle cx="10.5" cy="4.2" r="1" fill="#8a5a20"/></svg>
<div style="left:0;top:0;width:1128px;height:180px;overflow:hidden">
<div class="t" style="left:1098px;top:149px;font-size:11.3px;color:#111;">Came</div>
</div>
<svg style="position:absolute;left:1131px;top:153px" width="14" height="10"><path d="M1 5C4 1 10 1 13 5C10 9 4 9 1 5Z" fill="#fff" stroke="#222" stroke-width="0.8"/><circle cx="7" cy="5" r="2" fill="#222"/></svg>
<svg style="position:absolute;left:1152px;top:151px" width="10" height="14"><path d="M1.5 1V11L4 8.5L6 13L8 12L6 7.5H9.5Z" fill="#eee" stroke="#222" stroke-width="0.9"/></svg>
<svg style="position:absolute;left:1167px;top:152px" width="14" height="12"><rect x="1" y="3" width="12" height="8" fill="#ddd" stroke="#222" stroke-width="0.9"/><circle cx="7" cy="7" r="2.2" fill="#333" stroke="#eee" stroke-width="0.8"/><rect x="2" y="1.5" width="3.5" height="1.5" fill="#222"/></svg>
<div style="position:absolute;left:1042px;top:163px;width:158px;height:16px;background:#727272"></div>
<div style="position:absolute;left:1045px;top:164px;width:135px;height:12px;background:#5f5f5f;border-radius:6px"></div>
<div style="position:absolute;left:1046px;top:165px;width:81px;height:10px;background:linear-gradient(#a8a8a8,#8e8e8e);border-radius:5px"></div>
<div style="position:absolute;left:1184px;top:96px;width:12px;height:63px;background:#5f5f5f;border-radius:6px"></div>
<div style="position:absolute;left:1185px;top:97px;width:10px;height:39px;background:linear-gradient(90deg,#a8a8a8,#8e8e8e);border-radius:5px"></div>
<div style="position:absolute;left:1042px;top:181px;width:158px;height:23px;background:#727272"></div>
<div style="position:absolute;left:1050px;top:184px;width:28px;height:19px;background:linear-gradient(#555,#3d3d3d);border:1px solid #1f1f1f;border-radius:4px"></div>
<svg style="position:absolute;left:1053px;top:186px" width="15" height="15"><rect x="1.5" y="2" width="12" height="4" rx="2" fill="#444" stroke="#ddd" stroke-width="1"/><rect x="8" y="2.5" width="4.5" height="3" fill="#ddd"/><rect x="1.5" y="9" width="12" height="4" rx="2" fill="#fff" stroke="#222" stroke-width="1"/></svg>
<svg style="position:absolute;left:1067px;top:186.5px" width="8" height="14" viewBox="0 0 8 14"><path d="M4 1.5L7 5.5H1Z M4 12.5L7 8.5H1Z" fill="#e6e6e6"/></svg>
<div style="position:absolute;left:1085px;top:184px;width:20px;height:19px;background:linear-gradient(#6a93d2,#5078bb);border:1px solid #1f1f1f;border-radius:4px 0 0 4px"></div>
<div style="position:absolute;left:1104px;top:184px;width:19px;height:19px;background:linear-gradient(#555,#404040);border:1px solid #1f1f1f;border-radius:0"></div>
<div style="position:absolute;left:1122px;top:184px;width:20px;height:19px;background:linear-gradient(#555,#404040);border:1px solid #1f1f1f;border-radius:0"></div>
<div style="position:absolute;left:1141px;top:184px;width:20px;height:19px;background:linear-gradient(#555,#404040);border:1px solid #1f1f1f;border-radius:0"></div>
<div style="position:absolute;left:1160px;top:184px;width:19px;height:19px;background:linear-gradient(#555,#404040);border:1px solid #1f1f1f;border-radius:0"></div>
<div style="position:absolute;left:1178px;top:184px;width:20px;height:19px;background:linear-gradient(#555,#404040);border:1px solid #1f1f1f;border-radius:0"></div>
<svg style="position:absolute;left:1087px;top:186px" width="16" height="15" viewBox="0 0 16 15"><rect x="1" y="3" width="14" height="10.5" fill="#1e1e1e"/><rect x="1.5" y="3.5" width="13" height="3.5" fill="#eaeaea"/><rect x="2.5" y="1.5" width="4" height="2" fill="#ddd"/><rect x="1.5" y="12.2" width="13" height="1.3" fill="#ddd"/><circle cx="9.5" cy="9" r="3.8" fill="#eee"/><circle cx="9.5" cy="9" r="2.3" fill="#3a2626"/></svg>
<svg style="position:absolute;left:1106px;top:186px" width="15" height="15"><rect x="4" y="4" width="10" height="10" fill="#aaa" stroke="#333" stroke-width="0.8"/><rect x="1.5" y="1.5" width="10" height="10" fill="#ccc" stroke="#333" stroke-width="0.8"/><path d="M7 3V8" stroke="#4a78c8" stroke-width="1.6"/><circle cx="6" cy="8.5" r="1.6" fill="#4a78c8"/></svg>
<svg style="position:absolute;left:1124px;top:186px" width="15.2" height="15.2" viewBox="0 0 16 16"><defs><radialGradient id="glw1124186"><stop offset="0" stop-color="#fffbc0" stop-opacity="0.9"/><stop offset="1" stop-color="#d8d8a0" stop-opacity="0"/></radialGradient><linearGradient id="cyl1124186" x1="0" x2="1"><stop offset="0" stop-color="#d8e8ff"/><stop offset="1" stop-color="#3a68b8"/></linearGradient><radialGradient id="sp1124186" cx="0.35" cy="0.35" r="0.7"><stop offset="0" stop-color="#fff"/><stop offset="1" stop-color="#999"/></radialGradient></defs><circle cx="4.5" cy="4" r="4" fill="url(#glw1124186)"/><rect x="8.5" y="2.5" width="6" height="10" rx="2.2" fill="url(#cyl1124186)" stroke="#1a2030" stroke-width="0.9"/><circle cx="6" cy="11.5" r="3.6" fill="url(#sp1124186)" stroke="#151515" stroke-width="1"/></svg>
<svg style="position:absolute;left:1144px;top:187px" width="14" height="14" viewBox="0 0 14 14"><defs><radialGradient id="wg" cx="0.4" cy="0.4" r="0.7"><stop offset="0" stop-color="#a8c8d8"/><stop offset="1" stop-color="#3a6a80"/></radialGradient></defs><circle cx="7" cy="7" r="5.8" fill="url(#wg)" stroke="#aab" stroke-width="0.9"/><path d="M4 4C5.5 5 6.5 3.5 8 4.5C8.5 6.5 7 8 9 10C7.5 11 5.5 9.5 4 10.5Z" fill="#2e5a3a" opacity="0.8"/><path d="M9.5 3.5C10.5 4 11 5 11.5 6L10 6.5Z" fill="#2e5a3a" opacity="0.8"/></svg>
<svg style="position:absolute;left:1163px;top:187px" width="13" height="14" viewBox="0 0 13 14"><path d="M6.5 1L12 3.5V10.5L6.5 13L1 10.5V3.5Z" fill="#b8865a" stroke="#2a1a10" stroke-width="0.8"/><path d="M1 3.5L6.5 6L12 3.5L6.5 1Z" fill="#e8c8a0"/><path d="M6.5 6V13L1 10.5V3.5Z" fill="#d0a070"/></svg>
<svg style="position:absolute;left:1180px;top:186px" width="16" height="15"><g stroke="#ccc" stroke-width="2" fill="none"><rect x="1.5" y="7" width="7" height="4" rx="2" transform="rotate(-40 5 9)"/><rect x="7.5" y="3" width="7" height="4" rx="2" transform="rotate(-40 11 5)"/></g></svg>
<div style="position:absolute;left:1184px;top:210px;width:12px;height:531px;background:#5f5f5f;border-radius:6px"></div>
<div style="position:absolute;left:1185px;top:211px;width:10px;height:407px;background:linear-gradient(90deg,#a8a8a8,#8e8e8e);border-radius:5px"></div>
<svg style="position:absolute;left:1050px;top:215px" width="16" height="15" viewBox="0 0 16 15"><path d="M2.5 13.5L6.5 9.5" stroke="#111" stroke-width="2.6" stroke-linecap="round"/><path d="M2.5 13.5L6.5 9.5" stroke="#eee" stroke-width="1.3" stroke-linecap="round"/><path d="M4.5 7.5L10 2L11.5 3.5L10.5 5L12 6.5L13.5 5.5L15 7L9.5 12.5L8 11L9 10L6 7L5 8Z" fill="#ddd" stroke="#111" stroke-width="0.9" transform="translate(-1,0)"/></svg>
<svg style="position:absolute;left:1071px;top:214px" width="15.2" height="15.2" viewBox="0 0 16 16"><defs><radialGradient id="glw1071214"><stop offset="0" stop-color="#fffbc0" stop-opacity="0.9"/><stop offset="1" stop-color="#d8d8a0" stop-opacity="0"/></radialGradient><linearGradient id="cyl1071214" x1="0" x2="1"><stop offset="0" stop-color="#d8e8ff"/><stop offset="1" stop-color="#3a68b8"/></linearGradient><radialGradient id="sp1071214" cx="0.35" cy="0.35" r="0.7"><stop offset="0" stop-color="#fff"/><stop offset="1" stop-color="#999"/></radialGradient></defs><circle cx="4.5" cy="4" r="4" fill="url(#glw1071214)"/><rect x="8.5" y="2.5" width="6" height="10" rx="2.2" fill="url(#cyl1071214)" stroke="#1a2030" stroke-width="0.9"/><circle cx="6" cy="11.5" r="3.6" fill="url(#sp1071214)" stroke="#151515" stroke-width="1"/></svg>
<div class="t" style="left:1090px;top:213px;font-size:11.3px;color:#111;">Scene</div>
<div style="position:absolute;left:1042px;top:238px;width:141px;height:1px;background:#606060"></div>
<div style="position:absolute;left:1042px;top:239px;width:141px;height:1px;background:#7e7e7e"></div>
<svg style="position:absolute;left:1049px;top:246px" width="10" height="9"><path d="M1.8 1.5H8.2L5 7.5Z" fill="#222"/></svg>
<div class="t" style="left:1063px;top:240px;font-size:11.3px;color:#111;">Render</div>
<svg style="position:absolute;left:1166px;top:247px" width="12" height="6"><path d="M0 1.5H12M0 4.5H12" stroke="#7e7e7e" stroke-width="0.8"/></svg>
<div style="position:absolute;left:1049px;top:267px;width:43px;height:19px;background:linear-gradient(#a8a8a8,#8e8e8e);border:1px solid #1f1f1f;border-radius:4px 0 0 4px"></div>
<div style="position:absolute;left:1090px;top:267px;width:44px;height:19px;background:linear-gradient(#a8a8a8,#8e8e8e);border:1px solid #1f1f1f;border-radius:0"></div>
<div style="position:absolute;left:1132px;top:267px;width:45px;height:19px;background:linear-gradient(#a8a8a8,#8e8e8e);border:1px solid #1f1f1f;border-radius:0 4px 4px 0"></div>
<svg style="position:absolute;left:1051px;top:268px" width="16" height="16" viewBox="0 0 16 16"><rect x="1" y="4" width="13" height="10" rx="1" fill="#2a2a2a" stroke="#eee" stroke-width="0.9"/><rect x="1.5" y="4.5" width="12" height="3" fill="#e8e8e8"/><rect x="2.5" y="2.5" width="4" height="2" fill="#e8e8e8"/><circle cx="9" cy="9.5" r="3.4" fill="#eee"/><circle cx="9" cy="9.5" r="2" fill="#3a2a2a"/><path d="M13.5 0.5L14.2 2.3L16 3L14.2 3.7L13.5 5.5L12.8 3.7L11 3L12.8 2.3Z" fill="#ffe860"/></svg>
<div class="t" style="left:1068px;top:267px;font-size:11.3px;color:#111;">Ren</div>
<svg style="position:absolute;left:1094px;top:268px" width="16" height="16"><rect x="2" y="7" width="12" height="7" fill="#333" stroke="#ddd" stroke-width="1"/><path d="M2 6L13 2.5L14 5L3 8.5Z" fill="#333" stroke="#ddd" stroke-width="1"/><circle cx="2.5" cy="8" r="1.6" fill="#6aa0e8"/></svg>
<div class="t" style="left:1111px;top:267px;font-size:11.3px;color:#111;">Ani</div>
<svg style="position:absolute;left:1135px;top:268px" width="16" height="16"><path d="M2 6H5L9 2.5V13.5L5 10H2Z" fill="#ddd" stroke="#222" stroke-width="0.9"/><path d="M11 5C12.5 6.5 12.5 9.5 11 11M13 3.5C15.5 6 15.5 10 13 12.5" stroke="#5a8ad0" stroke-width="1.2" fill="none"/></svg>
<div class="t" style="left:1151px;top:267px;font-size:11.3px;color:#111;">Audi</div>
<div class="t" style="left:1056px;top:291px;font-size:11.3px;color:#111;">Displa</div>
<div style="position:absolute;left:1096px;top:291px;width:62px;height:19px;background:linear-gradient(#555,#3d3d3d);border:1px solid #1f1f1f;border-radius:4px 0 0 4px"></div>
<div class="t" style="left:1103px;top:290.5px;font-size:11px;color:#fff;">Image E</div>
<svg style="position:absolute;left:1146px;top:293.5px" width="8" height="14" viewBox="0 0 8 14"><path d="M4 1.5L7 5.5H1Z M4 12.5L7 8.5H1Z" fill="#e6e6e6"/></svg>
<div style="position:absolute;left:1157px;top:291px;width:20px;height:19px;background:linear-gradient(#a8a8a8,#8e8e8e);border:1px solid #1f1f1f;border-radius:0 4px 4px 0"></div>
<svg style="position:absolute;left:1159px;top:292px" width="16" height="16"><path d="M4 7V4.5A2.5 2.5 0 0 1 9 4.5" stroke="#eee" stroke-width="1.3" fill="none"/><rect x="5" y="7" width="9" height="7" fill="#eee" stroke="#222" stroke-width="0.9"/></svg>
<div style="position:absolute;left:1042px;top:316px;width:141px;height:1px;background:#606060"></div>
<div style="position:absolute;left:1042px;top:317px;width:141px;height:1px;background:#7e7e7e"></div>
<svg style="position:absolute;left:1049px;top:324px" width="10" height="9"><path d="M1.8 1.5H8.2L5 7.5Z" fill="#222"/></svg>
<div class="t" style="left:1063px;top:318px;font-size:11.3px;color:#111;">Dimensions</div>
<svg style="position:absolute;left:1166px;top:325px" width="12" height="6"><path d="M0 1.5H12M0 4.5H12" stroke="#7e7e7e" stroke-width="0.8"/></svg>
<div style="position:absolute;left:1049px;top:345px;width:90px;height:19px;background:linear-gradient(#555,#3d3d3d);border:1px solid #1f1f1f;border-radius:4px 0 0 4px"></div>
<div class="t" style="left:1056px;top:344.5px;font-size:11px;color:#fff;">Render Pres...</div>
<svg style="position:absolute;left:1127px;top:347.5px" width="8" height="14" viewBox="0 0 8 14"><path d="M4 1.5L7 5.5H1Z M4 12.5L7 8.5H1Z" fill="#e6e6e6"/></svg>
<div style="position:absolute;left:1138px;top:345px;width:21px;height:19px;background:linear-gradient(#a8a8a8,#8e8e8e);border:1px solid #1f1f1f;border-radius:0"></div>
<div style="position:absolute;left:1157px;top:345px;width:20px;height:19px;background:linear-gradient(#a8a8a8,#8e8e8e);border:1px solid #1f1f1f;border-radius:0 4px 4px 0"></div>
<svg style="position:absolute;left:1141px;top:348px" width="13" height="13"><path d="M6.5 1.5V11.5M1.5 6.5H11.5" stroke="#222" stroke-width="4"/><path d="M6.5 1.5V11.5M1.5 6.5H11.5" stroke="#fff" stroke-width="2"/></svg>
<svg style="position:absolute;left:1160px;top:348px" width="13" height="13"><path d="M1.5 6.5H11.5" stroke="#222" stroke-width="4"/><path d="M1.5 6.5H11.5" stroke="#fff" stroke-width="2"/></svg>
<div class="t" style="left:1056px;top:369px;font-size:11.3px;color:#111;">Resoluti...</div>
<div class="t" style="left:1124px;top:369px;font-size:11.3px;color:#111;">Frame R...</div>
<div style="position:absolute;left:1049px;top:388px;width:60px;height:19px;background:linear-gradient(#b8b8b8,#a6a6a6);border:1px solid #1f1f1f;border-radius:8px 8px 0 0"></div>
<div style="position:absolute;left:1049px;top:406px;width:60px;height:19px;background:linear-gradient(#b8b8b8,#a6a6a6);border:1px solid #1f1f1f;border-radius:0"></div>
<div style="position:absolute;left:1049px;top:424px;width:60px;height:19px;background:linear-gradient(#b8b8b8,#a6a6a6);border:1px solid #1f1f1f;border-radius:0 0 8px 8px"></div>
<div style="position:absolute;left:1050px;top:425px;width:32px;height:17px;background:linear-gradient(#6e6e6e,#5e5e5e);border-radius:0 0 0 7px"></div>
<div style="position:absolute;left:1117px;top:388px;width:60px;height:19px;background:linear-gradient(#b8b8b8,#a6a6a6);border:1px solid #1f1f1f;border-radius:8px 8px 0 0"></div>
<div style="position:absolute;left:1117px;top:406px;width:60px;height:19px;background:linear-gradient(#b8b8b8,#a6a6a6);border:1px solid #1f1f1f;border-radius:0"></div>
<div style="position:absolute;left:1117px;top:424px;width:60px;height:19px;background:linear-gradient(#b8b8b8,#a6a6a6);border:1px solid #1f1f1f;border-radius:0 0 8px 8px"></div>
<div class="t" style="left:979px;width:200px;text-align:center;top:387px;font-size:11.3px;color:#111;">1920</div>
<div class="t" style="left:1046px;width:200px;text-align:center;top:387px;font-size:11.3px;color:#111;">Sta: 1</div>
<svg style="position:absolute;left:1053px;top:393px" width="6" height="8"><path d="M5 1L1 4L5 7Z" fill="#8a8a8a"/></svg>
<svg style="position:absolute;left:1099px;top:393px" width="6" height="8"><path d="M1 1L5 4L1 7Z" fill="#8a8a8a"/></svg>
<svg style="position:absolute;left:1121px;top:393px" width="6" height="8"><path d="M5 1L1 4L5 7Z" fill="#8a8a8a"/></svg>
<svg style="position:absolute;left:1166px;top:393px" width="6" height="8"><path d="M1 1L5 4L1 7Z" fill="#8a8a8a"/></svg>
<div class="t" style="left:979px;width:200px;text-align:center;top:405px;font-size:11.3px;color:#111;">1080</div>
<div class="t" style="left:1046px;width:200px;text-align:center;top:405px;font-size:11.3px;color:#111;">:&nbsp; 250</div>
<svg style="position:absolute;left:1053px;top:411px" width="6" height="8"><path d="M5 1L1 4L5 7Z" fill="#8a8a8a"/></svg>
<svg style="position:absolute;left:1099px;top:411px" width="6" height="8"><path d="M1 1L5 4L1 7Z" fill="#8a8a8a"/></svg>
<svg style="position:absolute;left:1121px;top:411px" width="6" height="8"><path d="M5 1L1 4L5 7Z" fill="#8a8a8a"/></svg>
<svg style="position:absolute;left:1166px;top:411px" width="6" height="8"><path d="M1 1L5 4L1 7Z" fill="#8a8a8a"/></svg>
<div class="t" style="left:984px;width:200px;text-align:center;top:424px;font-size:11.3px;color:#111;">50%</div>
<div class="t" style="left:1046px;width:200px;text-align:center;top:424px;font-size:11.3px;color:#111;">Fra: 1</div>
<svg style="position:absolute;left:1121px;top:430px" width="6" height="8"><path d="M5 1L1 4L5 7Z" fill="#8a8a8a"/></svg>
<svg style="position:absolute;left:1166px;top:430px" width="6" height="8"><path d="M1 1L5 4L1 7Z" fill="#8a8a8a"/></svg>
<div class="t" style="left:1056px;top:444px;font-size:11.3px;color:#111;">Aspect R...</div>
<div class="t" style="left:1124px;top:444px;font-size:11.3px;color:#111;">Frame R...</div>
<div style="position:absolute;left:1049px;top:463px;width:60px;height:18px;background:linear-gradient(#b8b8b8,#a6a6a6);border:1px solid #1f1f1f;border-radius:8px 8px 0 0"></div>
<div style="position:absolute;left:1049px;top:480px;width:60px;height:19px;background:linear-gradient(#b8b8b8,#a6a6a6);border:1px solid #1f1f1f;border-radius:0 0 8px 8px"></div>
<div class="t" style="left:979px;width:200px;text-align:center;top:462px;font-size:11.3px;color:#111;">1.000</div>
<svg style="position:absolute;left:1053px;top:468px" width="6" height="8"><path d="M5 1L1 4L5 7Z" fill="#8a8a8a"/></svg>
<svg style="position:absolute;left:1099px;top:468px" width="6" height="8"><path d="M1 1L5 4L1 7Z" fill="#8a8a8a"/></svg>
<div class="t" style="left:979px;width:200px;text-align:center;top:481px;font-size:11.3px;color:#111;">1.000</div>
<svg style="position:absolute;left:1053px;top:487px" width="6" height="8"><path d="M5 1L1 4L5 7Z" fill="#8a8a8a"/></svg>
<svg style="position:absolute;left:1099px;top:487px" width="6" height="8"><path d="M1 1L5 4L1 7Z" fill="#8a8a8a"/></svg>
<div style="position:absolute;left:1117px;top:463px;width:60px;height:18px;background:linear-gradient(#555,#3d3d3d);border:1px solid #1f1f1f;border-radius:4px"></div>
<div class="t" style="left:1124px;top:462.0px;font-size:11.3px;color:#fff;">24 fps</div>
<svg style="position:absolute;left:1165px;top:465.0px" width="8" height="14" viewBox="0 0 8 14"><path d="M4 1.5L7 5.5H1Z M4 12.5L7 8.5H1Z" fill="#e6e6e6"/></svg>
<div class="t" style="left:1124px;top:481px;font-size:11.3px;color:#111;">Time Re...</div>
<div style="position:absolute;left:1052px;top:505px;width:13px;height:13px;background:linear-gradient(#555,#464646);border:1px solid #303030;border-radius:3.5px"></div>
<div style="position:absolute;left:1086px;top:505px;width:13px;height:13px;background:#666;border:1px solid #555;border-radius:3px"></div>
<div style="position:absolute;left:1117px;top:500px;width:30px;height:18px;background:linear-gradient(#b8b8b8,#a6a6a6);border:1px solid #1f1f1f;border-radius:9px 0 0 9px"></div>
<div style="position:absolute;left:1146px;top:500px;width:31px;height:18px;background:linear-gradient(#b8b8b8,#a6a6a6);border:1px solid #1f1f1f;border-radius:0 9px 9px 0"></div>
<svg style="position:absolute;left:1121px;top:505px" width="6" height="8"><path d="M5 1L1 4L5 7Z" fill="#8a8a8a"/></svg>
<svg style="position:absolute;left:1136px;top:505px" width="6" height="8"><path d="M1 1L5 4L1 7Z" fill="#8a8a8a"/></svg>
<svg style="position:absolute;left:1151px;top:505px" width="6" height="8"><path d="M5 1L1 4L5 7Z" fill="#8a8a8a"/></svg>
<svg style="position:absolute;left:1166px;top:505px" width="6" height="8"><path d="M1 1L5 4L1 7Z" fill="#8a8a8a"/></svg>
<div style="position:absolute;left:1042px;top:527px;width:141px;height:1px;background:#606060"></div>
<div style="position:absolute;left:1042px;top:528px;width:141px;height:1px;background:#7e7e7e"></div>
<svg style="position:absolute;left:1049px;top:534px" width="10" height="9"><path d="M1.8 1.5H8.2L5 7.5Z" fill="#222"/></svg>
<div class="t" style="left:1082px;top:528px;font-size:11.3px;color:#111;">Anti-Aliasing</div>
<svg style="position:absolute;left:1166px;top:535px" width="12" height="6"><path d="M0 1.5H12M0 4.5H12" stroke="#7e7e7e" stroke-width="0.8"/></svg>
<div style="position:absolute;left:1066px;top:531px;width:13px;height:13px;background:linear-gradient(#555,#464646);border:1px solid #303030;border-radius:3.5px"></div>
<svg style="position:absolute;left:1066px;top:528px" width="16" height="16"><path d="M3.2 8.2L6 11.2L13 2.5" stroke="#e8e8e8" stroke-width="1.7" fill="none"/></svg>
<div style="position:absolute;left:1049px;top:556px;width:16px;height:19px;background:linear-gradient(#555,#3d3d3d);border:1px solid #1f1f1f;border-radius:4px 0 0 4px"></div>
<div class="t" style="left:957.0px;width:200px;text-align:center;top:556px;font-size:11.3px;color:#fff;">5</div>
<div style="position:absolute;left:1063px;top:556px;width:17px;height:19px;background:linear-gradient(#6a93d2,#5078bb);border:1px solid #1f1f1f;border-radius:0"></div>
<div class="t" style="left:971.5px;width:200px;text-align:center;top:556px;font-size:11.3px;color:#111;">8</div>
<div style="position:absolute;left:1078px;top:556px;width:17px;height:19px;background:linear-gradient(#555,#3d3d3d);border:1px solid #1f1f1f;border-radius:0"></div>
<div class="t" style="left:986.5px;width:200px;text-align:center;top:556px;font-size:11.3px;color:#fff;">11</div>
<div style="position:absolute;left:1093px;top:556px;width:17px;height:19px;background:linear-gradient(#555,#3d3d3d);border:1px solid #1f1f1f;border-radius:0 4px 4px 0"></div>
<div class="t" style="left:1001.5px;width:200px;text-align:center;top:556px;font-size:11.3px;color:#fff;">16</div>
<div style="position:absolute;left:1117px;top:556px;width:60px;height:19px;background:linear-gradient(#555,#3d3d3d);border:1px solid #1f1f1f;border-radius:4px"></div>
<div class="t" style="left:1124px;top:555.5px;font-size:11.3px;color:#fff;">Mitchell-</div>
<svg style="position:absolute;left:1165px;top:558.5px" width="8" height="14" viewBox="0 0 8 14"><path d="M4 1.5L7 5.5H1Z M4 12.5L7 8.5H1Z" fill="#e6e6e6"/></svg>
<div style="position:absolute;left:1052px;top:580px;width:13px;height:13px;background:linear-gradient(#555,#464646);border:1px solid #303030;border-radius:3.5px"></div>
<div class="t" style="left:1073px;top:577px;font-size:11.3px;color:#111;">Full Sa</div>
<div style="position:absolute;left:1117px;top:578px;width:60px;height:17px;background:linear-gradient(#b8b8b8,#a6a6a6);border:1px solid #1f1f1f;border-radius:9px"></div>
<svg style="position:absolute;left:1121px;top:582.5px" width="6" height="8"><path d="M5 1L1 4L5 7Z" fill="#8a8a8a"/></svg>
<svg style="position:absolute;left:1166px;top:582.5px" width="6" height="8"><path d="M1 1L5 4L1 7Z" fill="#8a8a8a"/></svg>
<div class="t" style="left:1046px;width:200px;text-align:center;top:577px;font-size:11.3px;color:#111;">1.000</div>
<div style="position:absolute;left:1042px;top:602px;width:141px;height:1px;background:#606060"></div>
<div style="position:absolute;left:1042px;top:603px;width:141px;height:1px;background:#7e7e7e"></div>
<svg style="position:absolute;left:1050px;top:608px" width="9" height="10"><path d="M1.5 1.8L7.5 5L1.5 8.2Z" fill="#222"/></svg>
<div class="t" style="left:1082px;top:603px;font-size:11.3px;color:#111;">Sampled Motion Bl</div>
<svg style="position:absolute;left:1166px;top:610px" width="12" height="6"><path d="M0 1.5H12M0 4.5H12" stroke="#7e7e7e" stroke-width="0.8"/></svg>
<div style="position:absolute;left:1066px;top:606px;width:13px;height:13px;background:linear-gradient(#555,#464646);border:1px solid #303030;border-radius:3.5px"></div>
<div style="position:absolute;left:1042px;top:623px;width:141px;height:1px;background:#606060"></div>
<div style="position:absolute;left:1042px;top:624px;width:141px;height:1px;background:#7e7e7e"></div>
<svg style="position:absolute;left:1050px;top:630px" width="9" height="10"><path d="M1.5 1.8L7.5 5L1.5 8.2Z" fill="#222"/></svg>
<div class="t" style="left:1063px;top:625px;font-size:11.3px;color:#111;">Shading</div>
<svg style="position:absolute;left:1166px;top:632px" width="12" height="6"><path d="M0 1.5H12M0 4.5H12" stroke="#7e7e7e" stroke-width="0.8"/></svg>
<div style="position:absolute;left:1042px;top:643px;width:141px;height:1px;background:#606060"></div>
<div style="position:absolute;left:1042px;top:644px;width:141px;height:1px;background:#7e7e7e"></div>
<svg style="position:absolute;left:1050px;top:650px" width="9" height="10"><path d="M1.5 1.8L7.5 5L1.5 8.2Z" fill="#222"/></svg>
<div class="t" style="left:1063px;top:645px;font-size:11.3px;color:#111;">Performance</div>
<svg style="position:absolute;left:1166px;top:652px" width="12" height="6"><path d="M0 1.5H12M0 4.5H12" stroke="#7e7e7e" stroke-width="0.8"/></svg>
<div style="position:absolute;left:1042px;top:664px;width:141px;height:1px;background:#606060"></div>
<div style="position:absolute;left:1042px;top:665px;width:141px;height:1px;background:#7e7e7e"></div>
<svg style="position:absolute;left:1050px;top:671px" width="9" height="10"><path d="M1.5 1.8L7.5 5L1.5 8.2Z" fill="#222"/></svg>
<div class="t" style="left:1063px;top:666px;font-size:11.3px;color:#111;">Post Processing</div>
<svg style="position:absolute;left:1166px;top:673px" width="12" height="6"><path d="M0 1.5H12M0 4.5H12" stroke="#7e7e7e" stroke-width="0.8"/></svg>
<div style="position:absolute;left:1042px;top:685px;width:141px;height:1px;background:#606060"></div>
<div style="position:absolute;left:1042px;top:686px;width:141px;height:1px;background:#7e7e7e"></div>
<svg style="position:absolute;left:1050px;top:692px" width="9" height="10"><path d="M1.5 1.8L7.5 5L1.5 8.2Z" fill="#222"/></svg>
<div class="t" style="left:1063px;top:687px;font-size:11.3px;color:#111;">Metadata</div>
<svg style="position:absolute;left:1166px;top:694px" width="12" height="6"><path d="M0 1.5H12M0 4.5H12" stroke="#7e7e7e" stroke-width="0.8"/></svg>
<div style="position:absolute;left:1042px;top:705px;width:141px;height:1px;background:#606060"></div>
<div style="position:absolute;left:1042px;top:706px;width:141px;height:1px;background:#7e7e7e"></div>
<svg style="position:absolute;left:1049px;top:713px" width="10" height="9"><path d="M1.8 1.5H8.2L5 7.5Z" fill="#222"/></svg>
<div class="t" style="left:1063px;top:707px;font-size:11.3px;color:#111;">Output</div>
<svg style="position:absolute;left:1166px;top:714px" width="12" height="6"><path d="M0 1.5H12M0 4.5H12" stroke="#7e7e7e" stroke-width="0.8"/></svg>
<div style="position:absolute;left:1049px;top:734px;width:110px;height:20px;background:linear-gradient(#c0c0c0,#aaa);border:1px solid #1f1f1f;border-radius:4px 0 0 0"></div>
<div class="t" style="left:1055px;top:735px;font-size:11.3px;color:#111;">/tmp/</div>
<div style="position:absolute;left:1158px;top:734px;width:19px;height:20px;background:linear-gradient(#a8a8a8,#8e8e8e);border:1px solid #1f1f1f;border-radius:0 4px 0 0"></div>
<div style="position:absolute;left:1042px;top:746px;width:158px;height:4px;background:#2b2b2b"></div>
<svg style="position:absolute;left:1028px;top:67px" width="12" height="12"><path d="M3 0L12 9M6.5 0L12 5.5M10 0L12 2" stroke="#262626" stroke-width="1.1"/><path d="M4.5 0L12 7.5M8 0L12 4" stroke="#555" stroke-width="0.7" opacity="0.5"/></svg>
<svg style="position:absolute;left:0px;top:54px" width="12" height="12"><path d="M0 3L9 12M0 6.5L5.5 12M0 10L2 12" stroke="#333" stroke-width="1.1"/><path d="M0 4.5L7.5 12M0 8L4 12" stroke="#999" stroke-width="0.7" opacity="0.5"/></svg>
<svg style="position:absolute;left:0px;top:668px" width="12" height="12"><path d="M0 3L9 12M0 6.5L5.5 12M0 10L2 12" stroke="#333" stroke-width="1.1"/><path d="M0 4.5L7.5 12M0 8L4 12" stroke="#999" stroke-width="0.7" opacity="0.5"/></svg>
<svg style="position:absolute;left:1028px;top:682px" width="12" height="12"><path d="M3 0L12 9M6.5 0L12 5.5M10 0L12 2" stroke="#262626" stroke-width="1.1"/><path d="M4.5 0L12 7.5M8 0L12 4" stroke="#777" stroke-width="0.7" opacity="0.5"/></svg>
<svg style="position:absolute;left:1188px;top:67px" width="12" height="12"><path d="M3 0L12 9M6.5 0L12 5.5M10 0L12 2" stroke="#333" stroke-width="1.1"/><path d="M4.5 0L12 7.5M8 0L12 4" stroke="#999" stroke-width="0.7" opacity="0.5"/></svg>
<svg style="position:absolute;left:1042px;top:167px" width="12" height="12"><path d="M0 3L9 12M0 6.5L5.5 12M0 10L2 12" stroke="#333" stroke-width="1.1"/><path d="M0 4.5L7.5 12M0 8L4 12" stroke="#999" stroke-width="0.7" opacity="0.5"/></svg>
<svg style="position:absolute;left:1188px;top:181px" width="12" height="12"><path d="M3 0L12 9M6.5 0L12 5.5M10 0L12 2" stroke="#333" stroke-width="1.1"/><path d="M4.5 0L12 7.5M8 0L12 4" stroke="#999" stroke-width="0.7" opacity="0.5"/></svg>
<svg style="position:absolute;left:1042px;top:734px" width="12" height="12"><path d="M0 3L9 12M0 6.5L5.5 12M0 10L2 12" stroke="#333" stroke-width="1.1"/><path d="M0 4.5L7.5 12M0 8L4 12" stroke="#999" stroke-width="0.7" opacity="0.5"/></svg>
<svg style="position:absolute;left:1160px;top:736px" width="15" height="10"><path d="M1 3H5L6 1.5H13V10H1Z" fill="#e8d8a8" stroke="#333" stroke-width="0.8"/><rect x="7" y="2" width="5" height="4" fill="#fff" stroke="#333" stroke-width="0.6"/></svg>
<div style="position:absolute;left:1042px;top:746px;width:158px;height:4px;background:#2b2b2b"></div>
<div style="position:absolute;left:0px;top:451px;width:150px;height:1px;background:#7a7a7a"></div>
<div style="position:absolute;left:0px;top:452px;width:150px;height:2px;background:#7e7e7e"></div></body></html>
